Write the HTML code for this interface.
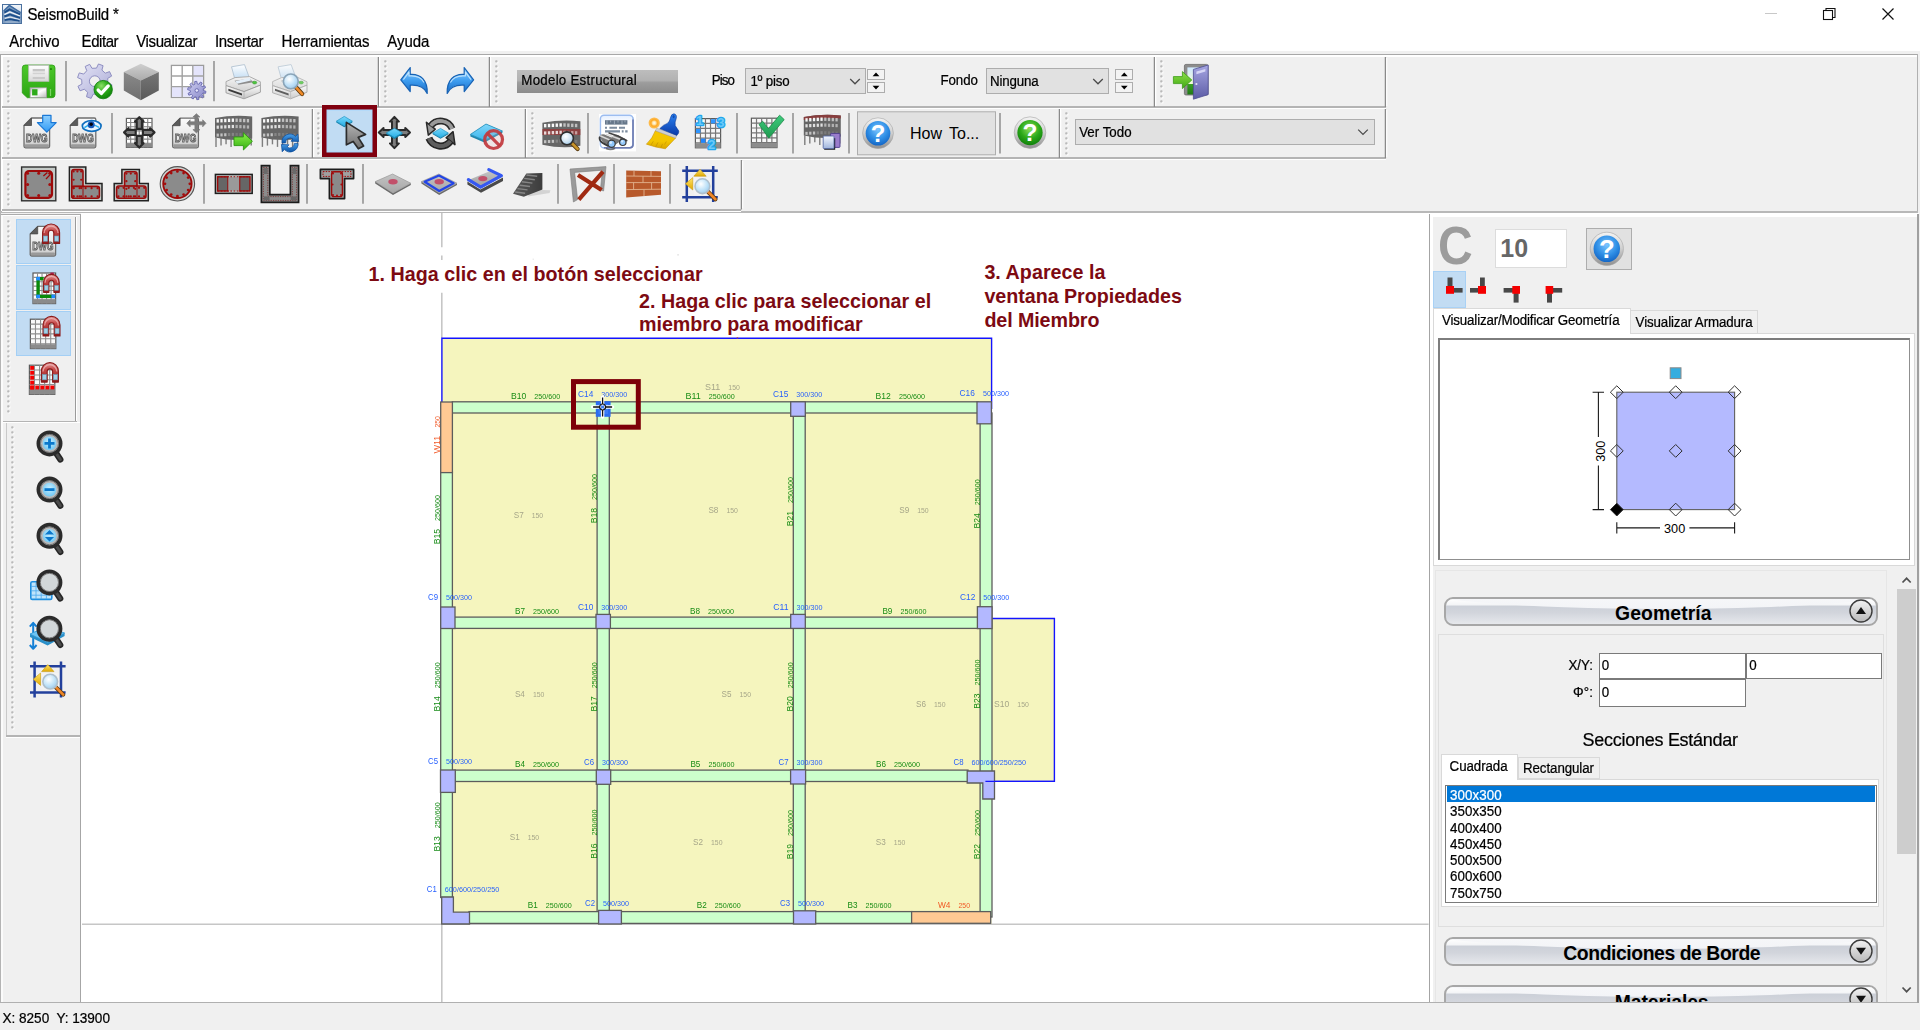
<!DOCTYPE html>
<html lang="es"><head><meta charset="utf-8"><title>SeismoBuild</title>
<style>
html,body{margin:0;padding:0}
body{width:1920px;height:1030px;overflow:hidden;background:#f0f0f0;position:relative;font-family:"Liberation Sans",sans-serif}
div,svg{position:absolute;box-sizing:border-box}
svg{overflow:visible}
svg text{font-family:"Liberation Sans",sans-serif}
</style></head><body>
<!-- p10_chrome -->
<div style="left:0px;top:0px;width:1920px;height:51px;background:#fff;"></div>
<svg style="left:2px;top:4px;" width="20" height="20" viewBox="0 0 20 20">
<defs><linearGradient id="ti" x1="0" y1="0" x2="0" y2="1"><stop offset="0" stop-color="#f4f7fa"/><stop offset=".3" stop-color="#e2e9f1"/><stop offset=".55" stop-color="#8fa9c6"/><stop offset="1" stop-color="#5f82ab"/></linearGradient>
<filter id="tib" x="-10%" y="-10%" width="120%" height="120%"><feGaussianBlur stdDeviation=".45"/></filter></defs>
<rect x="0" y="0" width="20" height="20" fill="url(#ti)"/>
<g filter="url(#tib)">
<path d="M1 7.4 L7.4 1 L19 8.6 L19 19 L1 19Z" fill="#7e9cc0"/>
<path d="M1.6 7 L7.4 1.4 L18.6 8.6" fill="none" stroke="#3d6aa0" stroke-width="1.5"/>
<path d="M2.4 8.6 L7.6 5.4 L18 10.4" fill="none" stroke="#1f508c" stroke-width="1.9"/>
<path d="M2.4 10.6 L7.8 7.9 L18 12" fill="none" stroke="#f3f6f9" stroke-width="1.3"/>
<path d="M2.4 12.5 L8 10.4 L18 14" fill="none" stroke="#1f508c" stroke-width="1.9"/>
<path d="M2.8 14.4 L8.2 13 L17.6 15.6" fill="none" stroke="#e7edf3" stroke-width="1.2"/>
<path d="M2.6 16.2 L8.2 15.2 L17.4 17" fill="none" stroke="#1f508c" stroke-width="1.8"/>
<path d="M3.4 18 H16.6" fill="none" stroke="#a9bdd4" stroke-width=".9"/>
</g>
<rect x=".5" y=".5" width="19" height="19" fill="none" stroke="#4b719f"/></svg>
<div style="left:27.5px;top:7.40px;font:normal 15px/15px 'Liberation Sans', sans-serif;color:#000;white-space:nowrap;letter-spacing:-0.173px;transform:scaleY(1.07);transform-origin:0 84.65%;-webkit-text-stroke:.22px #000;">SeismoBuild *</div>
<svg style="left:1760px;top:0px;" width="150" height="30" viewBox="0 0 150 30">
<path d="M5 13.5 H17" stroke="#c8c8c8" stroke-width="1"/>
<rect x="63.5" y="10.5" width="9" height="9" fill="none" stroke="#111" stroke-width="1.1"/>
<path d="M66 10.5 V8.5 H75 V17.5 H72.5" fill="none" stroke="#111" stroke-width="1.1"/>
<path d="M122.5 8.5 L133.5 19.5 M133.5 8.5 L122.5 19.5" stroke="#111" stroke-width="1.2" fill="none"/></svg>
<div style="left:9.3px;top:33.70px;font:normal 15px/15px 'Liberation Sans', sans-serif;color:#000;white-space:nowrap;letter-spacing:0.047px;transform:scaleY(1.07);transform-origin:0 84.65%;-webkit-text-stroke:.22px #000;">Archivo</div>
<div style="left:81.6px;top:33.70px;font:normal 15px/15px 'Liberation Sans', sans-serif;color:#000;white-space:nowrap;letter-spacing:-0.437px;transform:scaleY(1.07);transform-origin:0 84.65%;-webkit-text-stroke:.22px #000;">Editar</div>
<div style="left:136.2px;top:33.70px;font:normal 15px/15px 'Liberation Sans', sans-serif;color:#000;white-space:nowrap;letter-spacing:-0.373px;transform:scaleY(1.07);transform-origin:0 84.65%;-webkit-text-stroke:.22px #000;">Visualizar</div>
<div style="left:215px;top:33.70px;font:normal 15px/15px 'Liberation Sans', sans-serif;color:#000;white-space:nowrap;letter-spacing:-0.322px;transform:scaleY(1.07);transform-origin:0 84.65%;-webkit-text-stroke:.22px #000;">Insertar</div>
<div style="left:281.6px;top:33.70px;font:normal 15px/15px 'Liberation Sans', sans-serif;color:#000;white-space:nowrap;letter-spacing:-0.194px;transform:scaleY(1.07);transform-origin:0 84.65%;-webkit-text-stroke:.22px #000;">Herramientas</div>
<div style="left:387.3px;top:33.70px;font:normal 15px/15px 'Liberation Sans', sans-serif;color:#000;white-space:nowrap;letter-spacing:-0.04px;transform:scaleY(1.07);transform-origin:0 84.65%;-webkit-text-stroke:.22px #000;">Ayuda</div>
<!-- p20_toolbars -->
<div style="left:0px;top:54px;width:1918px;height:1px;background:#a8a8a8;"></div>
<div style="left:0px;top:54px;width:1px;height:158px;background:#a8a8a8;"></div>
<div style="left:1px;top:55px;width:1916px;height:2px;background:#ffffff;"></div>
<div style="left:1px;top:55px;width:1px;height:156px;background:#ffffff;"></div>
<div style="left:1917px;top:54px;width:1px;height:158px;background:#b0b0b0;"></div>
<div style="left:0px;top:211px;width:1918px;height:2px;background:#b8b8b8;"></div>
<div style="left:2px;top:106px;width:1384px;height:2px;background:#b4b4b4;"></div>
<div style="left:2px;top:108px;width:1384px;height:1px;background:#ffffff;"></div>
<div style="left:2px;top:157px;width:1384px;height:2px;background:#b4b4b4;"></div>
<div style="left:2px;top:159px;width:1384px;height:1px;background:#ffffff;"></div>
<div style="left:2px;top:208.5px;width:739px;height:2px;background:#b4b4b4;"></div>
<div style="left:2px;top:210.5px;width:739px;height:1px;background:#ffffff;"></div>
<svg style="left:376px;top:57px;" width="5" height="50" viewBox="0 0 5 50"><path d="M2.4 0 V50" stroke="#8a8a8a" stroke-width="1.3"/><path d="M3.7 1 V49" stroke="#fff" stroke-width="1.1"/></svg>
<div style="left:2px;top:57px;width:1px;height:49px;background:#ffffff;"></div>
<svg style="left:6.6px;top:60.4px;" width="4" height="45.6" viewBox="0 0 4 45.6"><rect x="1.2" y="1.2" width="2.2" height="2.2" fill="#fff"/><rect x="0.2" y="0.2" width="2.3" height="2.3" rx=".8" fill="#b9b9b9"/><rect x="1.2" y="6.2" width="2.2" height="2.2" fill="#fff"/><rect x="0.2" y="5.2" width="2.3" height="2.3" rx=".8" fill="#b9b9b9"/><rect x="1.2" y="11.2" width="2.2" height="2.2" fill="#fff"/><rect x="0.2" y="10.2" width="2.3" height="2.3" rx=".8" fill="#b9b9b9"/><rect x="1.2" y="16.2" width="2.2" height="2.2" fill="#fff"/><rect x="0.2" y="15.2" width="2.3" height="2.3" rx=".8" fill="#b9b9b9"/><rect x="1.2" y="21.2" width="2.2" height="2.2" fill="#fff"/><rect x="0.2" y="20.2" width="2.3" height="2.3" rx=".8" fill="#b9b9b9"/><rect x="1.2" y="26.2" width="2.2" height="2.2" fill="#fff"/><rect x="0.2" y="25.2" width="2.3" height="2.3" rx=".8" fill="#b9b9b9"/><rect x="1.2" y="31.2" width="2.2" height="2.2" fill="#fff"/><rect x="0.2" y="30.2" width="2.3" height="2.3" rx=".8" fill="#b9b9b9"/><rect x="1.2" y="36.2" width="2.2" height="2.2" fill="#fff"/><rect x="0.2" y="35.2" width="2.3" height="2.3" rx=".8" fill="#b9b9b9"/><rect x="1.2" y="41.2" width="2.2" height="2.2" fill="#fff"/><rect x="0.2" y="40.2" width="2.3" height="2.3" rx=".8" fill="#b9b9b9"/></svg>
<svg style="left:487px;top:57px;" width="5" height="50" viewBox="0 0 5 50"><path d="M2.4 0 V50" stroke="#8a8a8a" stroke-width="1.3"/><path d="M3.7 1 V49" stroke="#fff" stroke-width="1.1"/></svg>
<div style="left:379px;top:57px;width:1px;height:49px;background:#ffffff;"></div>
<svg style="left:383.6px;top:60.4px;" width="4" height="45.6" viewBox="0 0 4 45.6"><rect x="1.2" y="1.2" width="2.2" height="2.2" fill="#fff"/><rect x="0.2" y="0.2" width="2.3" height="2.3" rx=".8" fill="#b9b9b9"/><rect x="1.2" y="6.2" width="2.2" height="2.2" fill="#fff"/><rect x="0.2" y="5.2" width="2.3" height="2.3" rx=".8" fill="#b9b9b9"/><rect x="1.2" y="11.2" width="2.2" height="2.2" fill="#fff"/><rect x="0.2" y="10.2" width="2.3" height="2.3" rx=".8" fill="#b9b9b9"/><rect x="1.2" y="16.2" width="2.2" height="2.2" fill="#fff"/><rect x="0.2" y="15.2" width="2.3" height="2.3" rx=".8" fill="#b9b9b9"/><rect x="1.2" y="21.2" width="2.2" height="2.2" fill="#fff"/><rect x="0.2" y="20.2" width="2.3" height="2.3" rx=".8" fill="#b9b9b9"/><rect x="1.2" y="26.2" width="2.2" height="2.2" fill="#fff"/><rect x="0.2" y="25.2" width="2.3" height="2.3" rx=".8" fill="#b9b9b9"/><rect x="1.2" y="31.2" width="2.2" height="2.2" fill="#fff"/><rect x="0.2" y="30.2" width="2.3" height="2.3" rx=".8" fill="#b9b9b9"/><rect x="1.2" y="36.2" width="2.2" height="2.2" fill="#fff"/><rect x="0.2" y="35.2" width="2.3" height="2.3" rx=".8" fill="#b9b9b9"/><rect x="1.2" y="41.2" width="2.2" height="2.2" fill="#fff"/><rect x="0.2" y="40.2" width="2.3" height="2.3" rx=".8" fill="#b9b9b9"/></svg>
<svg style="left:1152px;top:57px;" width="5" height="50" viewBox="0 0 5 50"><path d="M2.4 0 V50" stroke="#8a8a8a" stroke-width="1.3"/><path d="M3.7 1 V49" stroke="#fff" stroke-width="1.1"/></svg>
<div style="left:490px;top:57px;width:1px;height:49px;background:#ffffff;"></div>
<svg style="left:494.6px;top:60.4px;" width="4" height="45.6" viewBox="0 0 4 45.6"><rect x="1.2" y="1.2" width="2.2" height="2.2" fill="#fff"/><rect x="0.2" y="0.2" width="2.3" height="2.3" rx=".8" fill="#b9b9b9"/><rect x="1.2" y="6.2" width="2.2" height="2.2" fill="#fff"/><rect x="0.2" y="5.2" width="2.3" height="2.3" rx=".8" fill="#b9b9b9"/><rect x="1.2" y="11.2" width="2.2" height="2.2" fill="#fff"/><rect x="0.2" y="10.2" width="2.3" height="2.3" rx=".8" fill="#b9b9b9"/><rect x="1.2" y="16.2" width="2.2" height="2.2" fill="#fff"/><rect x="0.2" y="15.2" width="2.3" height="2.3" rx=".8" fill="#b9b9b9"/><rect x="1.2" y="21.2" width="2.2" height="2.2" fill="#fff"/><rect x="0.2" y="20.2" width="2.3" height="2.3" rx=".8" fill="#b9b9b9"/><rect x="1.2" y="26.2" width="2.2" height="2.2" fill="#fff"/><rect x="0.2" y="25.2" width="2.3" height="2.3" rx=".8" fill="#b9b9b9"/><rect x="1.2" y="31.2" width="2.2" height="2.2" fill="#fff"/><rect x="0.2" y="30.2" width="2.3" height="2.3" rx=".8" fill="#b9b9b9"/><rect x="1.2" y="36.2" width="2.2" height="2.2" fill="#fff"/><rect x="0.2" y="35.2" width="2.3" height="2.3" rx=".8" fill="#b9b9b9"/><rect x="1.2" y="41.2" width="2.2" height="2.2" fill="#fff"/><rect x="0.2" y="40.2" width="2.3" height="2.3" rx=".8" fill="#b9b9b9"/></svg>
<svg style="left:1383px;top:57px;" width="5" height="50" viewBox="0 0 5 50"><path d="M2.4 0 V50" stroke="#8a8a8a" stroke-width="1.3"/><path d="M3.7 1 V49" stroke="#fff" stroke-width="1.1"/></svg>
<div style="left:1155px;top:57px;width:1px;height:49px;background:#ffffff;"></div>
<svg style="left:1159.6px;top:60.4px;" width="4" height="45.6" viewBox="0 0 4 45.6"><rect x="1.2" y="1.2" width="2.2" height="2.2" fill="#fff"/><rect x="0.2" y="0.2" width="2.3" height="2.3" rx=".8" fill="#b9b9b9"/><rect x="1.2" y="6.2" width="2.2" height="2.2" fill="#fff"/><rect x="0.2" y="5.2" width="2.3" height="2.3" rx=".8" fill="#b9b9b9"/><rect x="1.2" y="11.2" width="2.2" height="2.2" fill="#fff"/><rect x="0.2" y="10.2" width="2.3" height="2.3" rx=".8" fill="#b9b9b9"/><rect x="1.2" y="16.2" width="2.2" height="2.2" fill="#fff"/><rect x="0.2" y="15.2" width="2.3" height="2.3" rx=".8" fill="#b9b9b9"/><rect x="1.2" y="21.2" width="2.2" height="2.2" fill="#fff"/><rect x="0.2" y="20.2" width="2.3" height="2.3" rx=".8" fill="#b9b9b9"/><rect x="1.2" y="26.2" width="2.2" height="2.2" fill="#fff"/><rect x="0.2" y="25.2" width="2.3" height="2.3" rx=".8" fill="#b9b9b9"/><rect x="1.2" y="31.2" width="2.2" height="2.2" fill="#fff"/><rect x="0.2" y="30.2" width="2.3" height="2.3" rx=".8" fill="#b9b9b9"/><rect x="1.2" y="36.2" width="2.2" height="2.2" fill="#fff"/><rect x="0.2" y="35.2" width="2.3" height="2.3" rx=".8" fill="#b9b9b9"/><rect x="1.2" y="41.2" width="2.2" height="2.2" fill="#fff"/><rect x="0.2" y="40.2" width="2.3" height="2.3" rx=".8" fill="#b9b9b9"/></svg>
<svg style="left:309.5px;top:109px;" width="5" height="49" viewBox="0 0 5 49"><path d="M2.4 0 V49" stroke="#8a8a8a" stroke-width="1.3"/><path d="M3.7 1 V48" stroke="#fff" stroke-width="1.1"/></svg>
<div style="left:2px;top:109px;width:1px;height:48px;background:#ffffff;"></div>
<svg style="left:6.6px;top:112.4px;" width="4" height="44.599999999999994" viewBox="0 0 4 44.599999999999994"><rect x="1.2" y="1.2" width="2.2" height="2.2" fill="#fff"/><rect x="0.2" y="0.2" width="2.3" height="2.3" rx=".8" fill="#b9b9b9"/><rect x="1.2" y="6.2" width="2.2" height="2.2" fill="#fff"/><rect x="0.2" y="5.2" width="2.3" height="2.3" rx=".8" fill="#b9b9b9"/><rect x="1.2" y="11.2" width="2.2" height="2.2" fill="#fff"/><rect x="0.2" y="10.2" width="2.3" height="2.3" rx=".8" fill="#b9b9b9"/><rect x="1.2" y="16.2" width="2.2" height="2.2" fill="#fff"/><rect x="0.2" y="15.2" width="2.3" height="2.3" rx=".8" fill="#b9b9b9"/><rect x="1.2" y="21.2" width="2.2" height="2.2" fill="#fff"/><rect x="0.2" y="20.2" width="2.3" height="2.3" rx=".8" fill="#b9b9b9"/><rect x="1.2" y="26.2" width="2.2" height="2.2" fill="#fff"/><rect x="0.2" y="25.2" width="2.3" height="2.3" rx=".8" fill="#b9b9b9"/><rect x="1.2" y="31.2" width="2.2" height="2.2" fill="#fff"/><rect x="0.2" y="30.2" width="2.3" height="2.3" rx=".8" fill="#b9b9b9"/><rect x="1.2" y="36.2" width="2.2" height="2.2" fill="#fff"/><rect x="0.2" y="35.2" width="2.3" height="2.3" rx=".8" fill="#b9b9b9"/><rect x="1.2" y="41.2" width="2.2" height="2.2" fill="#fff"/><rect x="0.2" y="40.2" width="2.3" height="2.3" rx=".8" fill="#b9b9b9"/></svg>
<svg style="left:523px;top:109px;" width="5" height="49" viewBox="0 0 5 49"><path d="M2.4 0 V49" stroke="#8a8a8a" stroke-width="1.3"/><path d="M3.7 1 V48" stroke="#fff" stroke-width="1.1"/></svg>
<div style="left:312.5px;top:109px;width:1px;height:48px;background:#ffffff;"></div>
<svg style="left:317.1px;top:112.4px;" width="4" height="44.599999999999994" viewBox="0 0 4 44.599999999999994"><rect x="1.2" y="1.2" width="2.2" height="2.2" fill="#fff"/><rect x="0.2" y="0.2" width="2.3" height="2.3" rx=".8" fill="#b9b9b9"/><rect x="1.2" y="6.2" width="2.2" height="2.2" fill="#fff"/><rect x="0.2" y="5.2" width="2.3" height="2.3" rx=".8" fill="#b9b9b9"/><rect x="1.2" y="11.2" width="2.2" height="2.2" fill="#fff"/><rect x="0.2" y="10.2" width="2.3" height="2.3" rx=".8" fill="#b9b9b9"/><rect x="1.2" y="16.2" width="2.2" height="2.2" fill="#fff"/><rect x="0.2" y="15.2" width="2.3" height="2.3" rx=".8" fill="#b9b9b9"/><rect x="1.2" y="21.2" width="2.2" height="2.2" fill="#fff"/><rect x="0.2" y="20.2" width="2.3" height="2.3" rx=".8" fill="#b9b9b9"/><rect x="1.2" y="26.2" width="2.2" height="2.2" fill="#fff"/><rect x="0.2" y="25.2" width="2.3" height="2.3" rx=".8" fill="#b9b9b9"/><rect x="1.2" y="31.2" width="2.2" height="2.2" fill="#fff"/><rect x="0.2" y="30.2" width="2.3" height="2.3" rx=".8" fill="#b9b9b9"/><rect x="1.2" y="36.2" width="2.2" height="2.2" fill="#fff"/><rect x="0.2" y="35.2" width="2.3" height="2.3" rx=".8" fill="#b9b9b9"/><rect x="1.2" y="41.2" width="2.2" height="2.2" fill="#fff"/><rect x="0.2" y="40.2" width="2.3" height="2.3" rx=".8" fill="#b9b9b9"/></svg>
<svg style="left:1057.4px;top:109px;" width="5" height="49" viewBox="0 0 5 49"><path d="M2.4 0 V49" stroke="#8a8a8a" stroke-width="1.3"/><path d="M3.7 1 V48" stroke="#fff" stroke-width="1.1"/></svg>
<div style="left:526px;top:109px;width:1px;height:48px;background:#ffffff;"></div>
<svg style="left:530.6px;top:112.4px;" width="4" height="44.599999999999994" viewBox="0 0 4 44.599999999999994"><rect x="1.2" y="1.2" width="2.2" height="2.2" fill="#fff"/><rect x="0.2" y="0.2" width="2.3" height="2.3" rx=".8" fill="#b9b9b9"/><rect x="1.2" y="6.2" width="2.2" height="2.2" fill="#fff"/><rect x="0.2" y="5.2" width="2.3" height="2.3" rx=".8" fill="#b9b9b9"/><rect x="1.2" y="11.2" width="2.2" height="2.2" fill="#fff"/><rect x="0.2" y="10.2" width="2.3" height="2.3" rx=".8" fill="#b9b9b9"/><rect x="1.2" y="16.2" width="2.2" height="2.2" fill="#fff"/><rect x="0.2" y="15.2" width="2.3" height="2.3" rx=".8" fill="#b9b9b9"/><rect x="1.2" y="21.2" width="2.2" height="2.2" fill="#fff"/><rect x="0.2" y="20.2" width="2.3" height="2.3" rx=".8" fill="#b9b9b9"/><rect x="1.2" y="26.2" width="2.2" height="2.2" fill="#fff"/><rect x="0.2" y="25.2" width="2.3" height="2.3" rx=".8" fill="#b9b9b9"/><rect x="1.2" y="31.2" width="2.2" height="2.2" fill="#fff"/><rect x="0.2" y="30.2" width="2.3" height="2.3" rx=".8" fill="#b9b9b9"/><rect x="1.2" y="36.2" width="2.2" height="2.2" fill="#fff"/><rect x="0.2" y="35.2" width="2.3" height="2.3" rx=".8" fill="#b9b9b9"/><rect x="1.2" y="41.2" width="2.2" height="2.2" fill="#fff"/><rect x="0.2" y="40.2" width="2.3" height="2.3" rx=".8" fill="#b9b9b9"/></svg>
<svg style="left:1383px;top:109px;" width="5" height="49" viewBox="0 0 5 49"><path d="M2.4 0 V49" stroke="#8a8a8a" stroke-width="1.3"/><path d="M3.7 1 V48" stroke="#fff" stroke-width="1.1"/></svg>
<div style="left:1060.4px;top:109px;width:1px;height:48px;background:#ffffff;"></div>
<svg style="left:1065.0px;top:112.4px;" width="4" height="44.599999999999994" viewBox="0 0 4 44.599999999999994"><rect x="1.2" y="1.2" width="2.2" height="2.2" fill="#fff"/><rect x="0.2" y="0.2" width="2.3" height="2.3" rx=".8" fill="#b9b9b9"/><rect x="1.2" y="6.2" width="2.2" height="2.2" fill="#fff"/><rect x="0.2" y="5.2" width="2.3" height="2.3" rx=".8" fill="#b9b9b9"/><rect x="1.2" y="11.2" width="2.2" height="2.2" fill="#fff"/><rect x="0.2" y="10.2" width="2.3" height="2.3" rx=".8" fill="#b9b9b9"/><rect x="1.2" y="16.2" width="2.2" height="2.2" fill="#fff"/><rect x="0.2" y="15.2" width="2.3" height="2.3" rx=".8" fill="#b9b9b9"/><rect x="1.2" y="21.2" width="2.2" height="2.2" fill="#fff"/><rect x="0.2" y="20.2" width="2.3" height="2.3" rx=".8" fill="#b9b9b9"/><rect x="1.2" y="26.2" width="2.2" height="2.2" fill="#fff"/><rect x="0.2" y="25.2" width="2.3" height="2.3" rx=".8" fill="#b9b9b9"/><rect x="1.2" y="31.2" width="2.2" height="2.2" fill="#fff"/><rect x="0.2" y="30.2" width="2.3" height="2.3" rx=".8" fill="#b9b9b9"/><rect x="1.2" y="36.2" width="2.2" height="2.2" fill="#fff"/><rect x="0.2" y="35.2" width="2.3" height="2.3" rx=".8" fill="#b9b9b9"/><rect x="1.2" y="41.2" width="2.2" height="2.2" fill="#fff"/><rect x="0.2" y="40.2" width="2.3" height="2.3" rx=".8" fill="#b9b9b9"/></svg>
<svg style="left:738.5px;top:160px;" width="5" height="49.5" viewBox="0 0 5 49.5"><path d="M2.4 0 V49.5" stroke="#8a8a8a" stroke-width="1.3"/><path d="M3.7 1 V48.5" stroke="#fff" stroke-width="1.1"/></svg>
<div style="left:2px;top:160px;width:1px;height:48.5px;background:#ffffff;"></div>
<svg style="left:6.6px;top:163.4px;" width="4" height="45.099999999999994" viewBox="0 0 4 45.099999999999994"><rect x="1.2" y="1.2" width="2.2" height="2.2" fill="#fff"/><rect x="0.2" y="0.2" width="2.3" height="2.3" rx=".8" fill="#b9b9b9"/><rect x="1.2" y="6.2" width="2.2" height="2.2" fill="#fff"/><rect x="0.2" y="5.2" width="2.3" height="2.3" rx=".8" fill="#b9b9b9"/><rect x="1.2" y="11.2" width="2.2" height="2.2" fill="#fff"/><rect x="0.2" y="10.2" width="2.3" height="2.3" rx=".8" fill="#b9b9b9"/><rect x="1.2" y="16.2" width="2.2" height="2.2" fill="#fff"/><rect x="0.2" y="15.2" width="2.3" height="2.3" rx=".8" fill="#b9b9b9"/><rect x="1.2" y="21.2" width="2.2" height="2.2" fill="#fff"/><rect x="0.2" y="20.2" width="2.3" height="2.3" rx=".8" fill="#b9b9b9"/><rect x="1.2" y="26.2" width="2.2" height="2.2" fill="#fff"/><rect x="0.2" y="25.2" width="2.3" height="2.3" rx=".8" fill="#b9b9b9"/><rect x="1.2" y="31.2" width="2.2" height="2.2" fill="#fff"/><rect x="0.2" y="30.2" width="2.3" height="2.3" rx=".8" fill="#b9b9b9"/><rect x="1.2" y="36.2" width="2.2" height="2.2" fill="#fff"/><rect x="0.2" y="35.2" width="2.3" height="2.3" rx=".8" fill="#b9b9b9"/><rect x="1.2" y="41.2" width="2.2" height="2.2" fill="#fff"/><rect x="0.2" y="40.2" width="2.3" height="2.3" rx=".8" fill="#b9b9b9"/></svg>
<svg style="left:63.599999999999994px;top:61.4px;" width="4" height="40.199999999999996" viewBox="0 0 4 40.199999999999996"><path d="M2 0 V40.199999999999996" stroke="#767676" stroke-width="1.2"/></svg>
<svg style="left:212.1px;top:61.4px;" width="4" height="40.199999999999996" viewBox="0 0 4 40.199999999999996"><path d="M2 0 V40.199999999999996" stroke="#767676" stroke-width="1.2"/></svg>
<svg style="left:109.9px;top:112.8px;" width="4" height="40.60000000000001" viewBox="0 0 4 40.60000000000001"><path d="M2 0 V40.60000000000001" stroke="#767676" stroke-width="1.2"/></svg>
<svg style="left:586px;top:112.8px;" width="4" height="40.60000000000001" viewBox="0 0 4 40.60000000000001"><path d="M2 0 V40.60000000000001" stroke="#767676" stroke-width="1.2"/></svg>
<svg style="left:734.9px;top:112.8px;" width="4" height="40.60000000000001" viewBox="0 0 4 40.60000000000001"><path d="M2 0 V40.60000000000001" stroke="#767676" stroke-width="1.2"/></svg>
<svg style="left:790.9px;top:112.8px;" width="4" height="40.60000000000001" viewBox="0 0 4 40.60000000000001"><path d="M2 0 V40.60000000000001" stroke="#767676" stroke-width="1.2"/></svg>
<svg style="left:847.4px;top:112.8px;" width="4" height="40.60000000000001" viewBox="0 0 4 40.60000000000001"><path d="M2 0 V40.60000000000001" stroke="#767676" stroke-width="1.2"/></svg>
<svg style="left:998.2px;top:112.8px;" width="4" height="40.60000000000001" viewBox="0 0 4 40.60000000000001"><path d="M2 0 V40.60000000000001" stroke="#767676" stroke-width="1.2"/></svg>
<svg style="left:202.4px;top:164px;" width="4" height="39.80000000000001" viewBox="0 0 4 39.80000000000001"><path d="M2 0 V39.80000000000001" stroke="#767676" stroke-width="1.2"/></svg>
<svg style="left:304.9px;top:164px;" width="4" height="39.80000000000001" viewBox="0 0 4 39.80000000000001"><path d="M2 0 V39.80000000000001" stroke="#767676" stroke-width="1.2"/></svg>
<svg style="left:361px;top:164px;" width="4" height="39.80000000000001" viewBox="0 0 4 39.80000000000001"><path d="M2 0 V39.80000000000001" stroke="#767676" stroke-width="1.2"/></svg>
<svg style="left:555.9px;top:164px;" width="4" height="39.80000000000001" viewBox="0 0 4 39.80000000000001"><path d="M2 0 V39.80000000000001" stroke="#767676" stroke-width="1.2"/></svg>
<svg style="left:612.3px;top:164px;" width="4" height="39.80000000000001" viewBox="0 0 4 39.80000000000001"><path d="M2 0 V39.80000000000001" stroke="#767676" stroke-width="1.2"/></svg>
<svg style="left:668.4px;top:164px;" width="4" height="39.80000000000001" viewBox="0 0 4 39.80000000000001"><path d="M2 0 V39.80000000000001" stroke="#767676" stroke-width="1.2"/></svg>
<!-- p30_panels -->
<div style="left:81px;top:213px;width:1348px;height:789px;background:#fff;"></div>
<div style="left:0px;top:213px;width:81px;height:789px;background:#f0f0f0;"></div>
<div style="left:0px;top:213.5px;width:81px;height:1.5px;background:#ababab;"></div>
<div style="left:0px;top:213px;width:1px;height:789px;background:#b4b4b4;"></div>
<div style="left:79.5px;top:214px;width:1.6px;height:788px;background:#a6a6a6;"></div>
<div style="left:1.5px;top:215px;width:78px;height:1px;background:#fff;"></div>
<div style="left:1px;top:215px;width:2px;height:787px;background:#fbfbfb;"></div>
<div style="left:74.6px;top:217px;width:1.4px;height:204px;background:#9a9a9a;"></div>
<div style="left:76px;top:217px;width:1px;height:204px;background:#fff;"></div>
<div style="left:3px;top:420.5px;width:73.5px;height:1.5px;background:#b4b4b4;"></div>
<div style="left:3px;top:422px;width:77px;height:1px;background:#fff;"></div>
<svg style="left:7px;top:220px;" width="4" height="197" viewBox="0 0 4 197"><rect x="1.2" y="1.2" width="2.2" height="2.2" fill="#fff"/><rect x="0.2" y="0.2" width="2.3" height="2.3" rx=".8" fill="#b9b9b9"/><rect x="1.2" y="6.2" width="2.2" height="2.2" fill="#fff"/><rect x="0.2" y="5.2" width="2.3" height="2.3" rx=".8" fill="#b9b9b9"/><rect x="1.2" y="11.2" width="2.2" height="2.2" fill="#fff"/><rect x="0.2" y="10.2" width="2.3" height="2.3" rx=".8" fill="#b9b9b9"/><rect x="1.2" y="16.2" width="2.2" height="2.2" fill="#fff"/><rect x="0.2" y="15.2" width="2.3" height="2.3" rx=".8" fill="#b9b9b9"/><rect x="1.2" y="21.2" width="2.2" height="2.2" fill="#fff"/><rect x="0.2" y="20.2" width="2.3" height="2.3" rx=".8" fill="#b9b9b9"/><rect x="1.2" y="26.2" width="2.2" height="2.2" fill="#fff"/><rect x="0.2" y="25.2" width="2.3" height="2.3" rx=".8" fill="#b9b9b9"/><rect x="1.2" y="31.2" width="2.2" height="2.2" fill="#fff"/><rect x="0.2" y="30.2" width="2.3" height="2.3" rx=".8" fill="#b9b9b9"/><rect x="1.2" y="36.2" width="2.2" height="2.2" fill="#fff"/><rect x="0.2" y="35.2" width="2.3" height="2.3" rx=".8" fill="#b9b9b9"/><rect x="1.2" y="41.2" width="2.2" height="2.2" fill="#fff"/><rect x="0.2" y="40.2" width="2.3" height="2.3" rx=".8" fill="#b9b9b9"/><rect x="1.2" y="46.2" width="2.2" height="2.2" fill="#fff"/><rect x="0.2" y="45.2" width="2.3" height="2.3" rx=".8" fill="#b9b9b9"/><rect x="1.2" y="51.2" width="2.2" height="2.2" fill="#fff"/><rect x="0.2" y="50.2" width="2.3" height="2.3" rx=".8" fill="#b9b9b9"/><rect x="1.2" y="56.2" width="2.2" height="2.2" fill="#fff"/><rect x="0.2" y="55.2" width="2.3" height="2.3" rx=".8" fill="#b9b9b9"/><rect x="1.2" y="61.2" width="2.2" height="2.2" fill="#fff"/><rect x="0.2" y="60.2" width="2.3" height="2.3" rx=".8" fill="#b9b9b9"/><rect x="1.2" y="66.2" width="2.2" height="2.2" fill="#fff"/><rect x="0.2" y="65.2" width="2.3" height="2.3" rx=".8" fill="#b9b9b9"/><rect x="1.2" y="71.2" width="2.2" height="2.2" fill="#fff"/><rect x="0.2" y="70.2" width="2.3" height="2.3" rx=".8" fill="#b9b9b9"/><rect x="1.2" y="76.2" width="2.2" height="2.2" fill="#fff"/><rect x="0.2" y="75.2" width="2.3" height="2.3" rx=".8" fill="#b9b9b9"/><rect x="1.2" y="81.2" width="2.2" height="2.2" fill="#fff"/><rect x="0.2" y="80.2" width="2.3" height="2.3" rx=".8" fill="#b9b9b9"/><rect x="1.2" y="86.2" width="2.2" height="2.2" fill="#fff"/><rect x="0.2" y="85.2" width="2.3" height="2.3" rx=".8" fill="#b9b9b9"/><rect x="1.2" y="91.2" width="2.2" height="2.2" fill="#fff"/><rect x="0.2" y="90.2" width="2.3" height="2.3" rx=".8" fill="#b9b9b9"/><rect x="1.2" y="96.2" width="2.2" height="2.2" fill="#fff"/><rect x="0.2" y="95.2" width="2.3" height="2.3" rx=".8" fill="#b9b9b9"/><rect x="1.2" y="101.2" width="2.2" height="2.2" fill="#fff"/><rect x="0.2" y="100.2" width="2.3" height="2.3" rx=".8" fill="#b9b9b9"/><rect x="1.2" y="106.2" width="2.2" height="2.2" fill="#fff"/><rect x="0.2" y="105.2" width="2.3" height="2.3" rx=".8" fill="#b9b9b9"/><rect x="1.2" y="111.2" width="2.2" height="2.2" fill="#fff"/><rect x="0.2" y="110.2" width="2.3" height="2.3" rx=".8" fill="#b9b9b9"/><rect x="1.2" y="116.2" width="2.2" height="2.2" fill="#fff"/><rect x="0.2" y="115.2" width="2.3" height="2.3" rx=".8" fill="#b9b9b9"/><rect x="1.2" y="121.2" width="2.2" height="2.2" fill="#fff"/><rect x="0.2" y="120.2" width="2.3" height="2.3" rx=".8" fill="#b9b9b9"/><rect x="1.2" y="126.2" width="2.2" height="2.2" fill="#fff"/><rect x="0.2" y="125.2" width="2.3" height="2.3" rx=".8" fill="#b9b9b9"/><rect x="1.2" y="131.2" width="2.2" height="2.2" fill="#fff"/><rect x="0.2" y="130.2" width="2.3" height="2.3" rx=".8" fill="#b9b9b9"/><rect x="1.2" y="136.2" width="2.2" height="2.2" fill="#fff"/><rect x="0.2" y="135.2" width="2.3" height="2.3" rx=".8" fill="#b9b9b9"/><rect x="1.2" y="141.2" width="2.2" height="2.2" fill="#fff"/><rect x="0.2" y="140.2" width="2.3" height="2.3" rx=".8" fill="#b9b9b9"/><rect x="1.2" y="146.2" width="2.2" height="2.2" fill="#fff"/><rect x="0.2" y="145.2" width="2.3" height="2.3" rx=".8" fill="#b9b9b9"/><rect x="1.2" y="151.2" width="2.2" height="2.2" fill="#fff"/><rect x="0.2" y="150.2" width="2.3" height="2.3" rx=".8" fill="#b9b9b9"/><rect x="1.2" y="156.2" width="2.2" height="2.2" fill="#fff"/><rect x="0.2" y="155.2" width="2.3" height="2.3" rx=".8" fill="#b9b9b9"/><rect x="1.2" y="161.2" width="2.2" height="2.2" fill="#fff"/><rect x="0.2" y="160.2" width="2.3" height="2.3" rx=".8" fill="#b9b9b9"/><rect x="1.2" y="166.2" width="2.2" height="2.2" fill="#fff"/><rect x="0.2" y="165.2" width="2.3" height="2.3" rx=".8" fill="#b9b9b9"/><rect x="1.2" y="171.2" width="2.2" height="2.2" fill="#fff"/><rect x="0.2" y="170.2" width="2.3" height="2.3" rx=".8" fill="#b9b9b9"/><rect x="1.2" y="176.2" width="2.2" height="2.2" fill="#fff"/><rect x="0.2" y="175.2" width="2.3" height="2.3" rx=".8" fill="#b9b9b9"/><rect x="1.2" y="181.2" width="2.2" height="2.2" fill="#fff"/><rect x="0.2" y="180.2" width="2.3" height="2.3" rx=".8" fill="#b9b9b9"/><rect x="1.2" y="186.2" width="2.2" height="2.2" fill="#fff"/><rect x="0.2" y="185.2" width="2.3" height="2.3" rx=".8" fill="#b9b9b9"/><rect x="1.2" y="191.2" width="2.2" height="2.2" fill="#fff"/><rect x="0.2" y="190.2" width="2.3" height="2.3" rx=".8" fill="#b9b9b9"/></svg>
<div style="left:5.5px;top:423px;width:1.2px;height:313px;background:#c9c9c9;"></div>
<div style="left:6px;top:735.3px;width:74px;height:1.5px;background:#b4b4b4;"></div>
<div style="left:6px;top:736.8px;width:74px;height:1px;background:#fff;"></div>
<svg style="left:11px;top:426px;" width="4" height="306" viewBox="0 0 4 306"><rect x="1.2" y="1.2" width="2.2" height="2.2" fill="#fff"/><rect x="0.2" y="0.2" width="2.3" height="2.3" rx=".8" fill="#b9b9b9"/><rect x="1.2" y="6.2" width="2.2" height="2.2" fill="#fff"/><rect x="0.2" y="5.2" width="2.3" height="2.3" rx=".8" fill="#b9b9b9"/><rect x="1.2" y="11.2" width="2.2" height="2.2" fill="#fff"/><rect x="0.2" y="10.2" width="2.3" height="2.3" rx=".8" fill="#b9b9b9"/><rect x="1.2" y="16.2" width="2.2" height="2.2" fill="#fff"/><rect x="0.2" y="15.2" width="2.3" height="2.3" rx=".8" fill="#b9b9b9"/><rect x="1.2" y="21.2" width="2.2" height="2.2" fill="#fff"/><rect x="0.2" y="20.2" width="2.3" height="2.3" rx=".8" fill="#b9b9b9"/><rect x="1.2" y="26.2" width="2.2" height="2.2" fill="#fff"/><rect x="0.2" y="25.2" width="2.3" height="2.3" rx=".8" fill="#b9b9b9"/><rect x="1.2" y="31.2" width="2.2" height="2.2" fill="#fff"/><rect x="0.2" y="30.2" width="2.3" height="2.3" rx=".8" fill="#b9b9b9"/><rect x="1.2" y="36.2" width="2.2" height="2.2" fill="#fff"/><rect x="0.2" y="35.2" width="2.3" height="2.3" rx=".8" fill="#b9b9b9"/><rect x="1.2" y="41.2" width="2.2" height="2.2" fill="#fff"/><rect x="0.2" y="40.2" width="2.3" height="2.3" rx=".8" fill="#b9b9b9"/><rect x="1.2" y="46.2" width="2.2" height="2.2" fill="#fff"/><rect x="0.2" y="45.2" width="2.3" height="2.3" rx=".8" fill="#b9b9b9"/><rect x="1.2" y="51.2" width="2.2" height="2.2" fill="#fff"/><rect x="0.2" y="50.2" width="2.3" height="2.3" rx=".8" fill="#b9b9b9"/><rect x="1.2" y="56.2" width="2.2" height="2.2" fill="#fff"/><rect x="0.2" y="55.2" width="2.3" height="2.3" rx=".8" fill="#b9b9b9"/><rect x="1.2" y="61.2" width="2.2" height="2.2" fill="#fff"/><rect x="0.2" y="60.2" width="2.3" height="2.3" rx=".8" fill="#b9b9b9"/><rect x="1.2" y="66.2" width="2.2" height="2.2" fill="#fff"/><rect x="0.2" y="65.2" width="2.3" height="2.3" rx=".8" fill="#b9b9b9"/><rect x="1.2" y="71.2" width="2.2" height="2.2" fill="#fff"/><rect x="0.2" y="70.2" width="2.3" height="2.3" rx=".8" fill="#b9b9b9"/><rect x="1.2" y="76.2" width="2.2" height="2.2" fill="#fff"/><rect x="0.2" y="75.2" width="2.3" height="2.3" rx=".8" fill="#b9b9b9"/><rect x="1.2" y="81.2" width="2.2" height="2.2" fill="#fff"/><rect x="0.2" y="80.2" width="2.3" height="2.3" rx=".8" fill="#b9b9b9"/><rect x="1.2" y="86.2" width="2.2" height="2.2" fill="#fff"/><rect x="0.2" y="85.2" width="2.3" height="2.3" rx=".8" fill="#b9b9b9"/><rect x="1.2" y="91.2" width="2.2" height="2.2" fill="#fff"/><rect x="0.2" y="90.2" width="2.3" height="2.3" rx=".8" fill="#b9b9b9"/><rect x="1.2" y="96.2" width="2.2" height="2.2" fill="#fff"/><rect x="0.2" y="95.2" width="2.3" height="2.3" rx=".8" fill="#b9b9b9"/><rect x="1.2" y="101.2" width="2.2" height="2.2" fill="#fff"/><rect x="0.2" y="100.2" width="2.3" height="2.3" rx=".8" fill="#b9b9b9"/><rect x="1.2" y="106.2" width="2.2" height="2.2" fill="#fff"/><rect x="0.2" y="105.2" width="2.3" height="2.3" rx=".8" fill="#b9b9b9"/><rect x="1.2" y="111.2" width="2.2" height="2.2" fill="#fff"/><rect x="0.2" y="110.2" width="2.3" height="2.3" rx=".8" fill="#b9b9b9"/><rect x="1.2" y="116.2" width="2.2" height="2.2" fill="#fff"/><rect x="0.2" y="115.2" width="2.3" height="2.3" rx=".8" fill="#b9b9b9"/><rect x="1.2" y="121.2" width="2.2" height="2.2" fill="#fff"/><rect x="0.2" y="120.2" width="2.3" height="2.3" rx=".8" fill="#b9b9b9"/><rect x="1.2" y="126.2" width="2.2" height="2.2" fill="#fff"/><rect x="0.2" y="125.2" width="2.3" height="2.3" rx=".8" fill="#b9b9b9"/><rect x="1.2" y="131.2" width="2.2" height="2.2" fill="#fff"/><rect x="0.2" y="130.2" width="2.3" height="2.3" rx=".8" fill="#b9b9b9"/><rect x="1.2" y="136.2" width="2.2" height="2.2" fill="#fff"/><rect x="0.2" y="135.2" width="2.3" height="2.3" rx=".8" fill="#b9b9b9"/><rect x="1.2" y="141.2" width="2.2" height="2.2" fill="#fff"/><rect x="0.2" y="140.2" width="2.3" height="2.3" rx=".8" fill="#b9b9b9"/><rect x="1.2" y="146.2" width="2.2" height="2.2" fill="#fff"/><rect x="0.2" y="145.2" width="2.3" height="2.3" rx=".8" fill="#b9b9b9"/><rect x="1.2" y="151.2" width="2.2" height="2.2" fill="#fff"/><rect x="0.2" y="150.2" width="2.3" height="2.3" rx=".8" fill="#b9b9b9"/><rect x="1.2" y="156.2" width="2.2" height="2.2" fill="#fff"/><rect x="0.2" y="155.2" width="2.3" height="2.3" rx=".8" fill="#b9b9b9"/><rect x="1.2" y="161.2" width="2.2" height="2.2" fill="#fff"/><rect x="0.2" y="160.2" width="2.3" height="2.3" rx=".8" fill="#b9b9b9"/><rect x="1.2" y="166.2" width="2.2" height="2.2" fill="#fff"/><rect x="0.2" y="165.2" width="2.3" height="2.3" rx=".8" fill="#b9b9b9"/><rect x="1.2" y="171.2" width="2.2" height="2.2" fill="#fff"/><rect x="0.2" y="170.2" width="2.3" height="2.3" rx=".8" fill="#b9b9b9"/><rect x="1.2" y="176.2" width="2.2" height="2.2" fill="#fff"/><rect x="0.2" y="175.2" width="2.3" height="2.3" rx=".8" fill="#b9b9b9"/><rect x="1.2" y="181.2" width="2.2" height="2.2" fill="#fff"/><rect x="0.2" y="180.2" width="2.3" height="2.3" rx=".8" fill="#b9b9b9"/><rect x="1.2" y="186.2" width="2.2" height="2.2" fill="#fff"/><rect x="0.2" y="185.2" width="2.3" height="2.3" rx=".8" fill="#b9b9b9"/><rect x="1.2" y="191.2" width="2.2" height="2.2" fill="#fff"/><rect x="0.2" y="190.2" width="2.3" height="2.3" rx=".8" fill="#b9b9b9"/><rect x="1.2" y="196.2" width="2.2" height="2.2" fill="#fff"/><rect x="0.2" y="195.2" width="2.3" height="2.3" rx=".8" fill="#b9b9b9"/><rect x="1.2" y="201.2" width="2.2" height="2.2" fill="#fff"/><rect x="0.2" y="200.2" width="2.3" height="2.3" rx=".8" fill="#b9b9b9"/><rect x="1.2" y="206.2" width="2.2" height="2.2" fill="#fff"/><rect x="0.2" y="205.2" width="2.3" height="2.3" rx=".8" fill="#b9b9b9"/><rect x="1.2" y="211.2" width="2.2" height="2.2" fill="#fff"/><rect x="0.2" y="210.2" width="2.3" height="2.3" rx=".8" fill="#b9b9b9"/><rect x="1.2" y="216.2" width="2.2" height="2.2" fill="#fff"/><rect x="0.2" y="215.2" width="2.3" height="2.3" rx=".8" fill="#b9b9b9"/><rect x="1.2" y="221.2" width="2.2" height="2.2" fill="#fff"/><rect x="0.2" y="220.2" width="2.3" height="2.3" rx=".8" fill="#b9b9b9"/><rect x="1.2" y="226.2" width="2.2" height="2.2" fill="#fff"/><rect x="0.2" y="225.2" width="2.3" height="2.3" rx=".8" fill="#b9b9b9"/><rect x="1.2" y="231.2" width="2.2" height="2.2" fill="#fff"/><rect x="0.2" y="230.2" width="2.3" height="2.3" rx=".8" fill="#b9b9b9"/><rect x="1.2" y="236.2" width="2.2" height="2.2" fill="#fff"/><rect x="0.2" y="235.2" width="2.3" height="2.3" rx=".8" fill="#b9b9b9"/><rect x="1.2" y="241.2" width="2.2" height="2.2" fill="#fff"/><rect x="0.2" y="240.2" width="2.3" height="2.3" rx=".8" fill="#b9b9b9"/><rect x="1.2" y="246.2" width="2.2" height="2.2" fill="#fff"/><rect x="0.2" y="245.2" width="2.3" height="2.3" rx=".8" fill="#b9b9b9"/><rect x="1.2" y="251.2" width="2.2" height="2.2" fill="#fff"/><rect x="0.2" y="250.2" width="2.3" height="2.3" rx=".8" fill="#b9b9b9"/><rect x="1.2" y="256.2" width="2.2" height="2.2" fill="#fff"/><rect x="0.2" y="255.2" width="2.3" height="2.3" rx=".8" fill="#b9b9b9"/><rect x="1.2" y="261.2" width="2.2" height="2.2" fill="#fff"/><rect x="0.2" y="260.2" width="2.3" height="2.3" rx=".8" fill="#b9b9b9"/><rect x="1.2" y="266.2" width="2.2" height="2.2" fill="#fff"/><rect x="0.2" y="265.2" width="2.3" height="2.3" rx=".8" fill="#b9b9b9"/><rect x="1.2" y="271.2" width="2.2" height="2.2" fill="#fff"/><rect x="0.2" y="270.2" width="2.3" height="2.3" rx=".8" fill="#b9b9b9"/><rect x="1.2" y="276.2" width="2.2" height="2.2" fill="#fff"/><rect x="0.2" y="275.2" width="2.3" height="2.3" rx=".8" fill="#b9b9b9"/><rect x="1.2" y="281.2" width="2.2" height="2.2" fill="#fff"/><rect x="0.2" y="280.2" width="2.3" height="2.3" rx=".8" fill="#b9b9b9"/><rect x="1.2" y="286.2" width="2.2" height="2.2" fill="#fff"/><rect x="0.2" y="285.2" width="2.3" height="2.3" rx=".8" fill="#b9b9b9"/><rect x="1.2" y="291.2" width="2.2" height="2.2" fill="#fff"/><rect x="0.2" y="290.2" width="2.3" height="2.3" rx=".8" fill="#b9b9b9"/><rect x="1.2" y="296.2" width="2.2" height="2.2" fill="#fff"/><rect x="0.2" y="295.2" width="2.3" height="2.3" rx=".8" fill="#b9b9b9"/><rect x="1.2" y="301.2" width="2.2" height="2.2" fill="#fff"/><rect x="0.2" y="300.2" width="2.3" height="2.3" rx=".8" fill="#b9b9b9"/></svg>
<div style="left:16.3px;top:219.3px;width:54.6px;height:44.6px;background:#c2dcf3;border:1px solid #a3cff5;"></div>
<div style="left:16.3px;top:265.3px;width:54.6px;height:44.6px;background:#c2dcf3;border:1px solid #a3cff5;"></div>
<div style="left:16.3px;top:311.3px;width:54.6px;height:44.6px;background:#c2dcf3;border:1px solid #a3cff5;"></div>
<div style="left:0px;top:1001.5px;width:1920px;height:1.6px;background:#b0b0b0;"></div>
<div style="left:0px;top:1003px;width:1920px;height:27px;background:#f0f0f0;"></div>
<div style="left:2.5px;top:1012.09px;font:normal 13.6px/13.6px 'Liberation Sans', sans-serif;color:#000;white-space:nowrap;letter-spacing:-0.024px;transform:scaleY(1.12);transform-origin:0 84.65%;-webkit-text-stroke:.22px #000;white-space:pre;">X: 8250  Y: 13900</div>
<!-- p40_canvas -->
<svg style="left:81px;top:213px;" width="1348" height="789" viewBox="81 213 1348 789"><g stroke="#c6c6c6" stroke-width="1.6"><path d="M441.8 213 V247.3 M441.8 255.5 V260 M441.8 292.7 V338 M441.8 924 V1002"/><path d="M82 924.2 H1428.6"/></g><rect x="677.4" y="254.2" width="1.3" height="1.3" fill="#d8d8d8"/><rect x="532.6" y="258.6" width="1.2" height="1.2" fill="#e4e4e4"/><rect x="441.5" y="338" width="550" height="586" fill="#f5f5be"/><rect x="992" y="618.4" width="62.4" height="163" fill="#f5f5be"/><path d="M441.9 402 V338.2 H991.6 V409" fill="none" stroke="#1414ff" stroke-width="1.4"/><path d="M992 618.5 H1054.4 V781.4 H988" fill="none" stroke="#1414ff" stroke-width="1.4"/><rect x="440.7" y="472" width="11.70" height="425.50" fill="#ccffcc" stroke="#5c5c5c" stroke-width="1.3"/><rect x="597.1" y="413" width="12.20" height="499.00" fill="#ccffcc" stroke="#5c5c5c" stroke-width="1.3"/><rect x="793.3" y="413" width="11.90" height="499.00" fill="#ccffcc" stroke="#5c5c5c" stroke-width="1.3"/><rect x="980.1" y="413" width="11.90" height="504.00" fill="#ccffcc" stroke="#5c5c5c" stroke-width="1.3"/><rect x="452.3" y="401.8" width="525.70" height="11.20" fill="#ccffcc" stroke="#5c5c5c" stroke-width="1.3"/><rect x="454" y="617.1" width="524.00" height="11.30" fill="#ccffcc" stroke="#5c5c5c" stroke-width="1.3"/><rect x="454" y="770.1" width="514.00" height="11.40" fill="#ccffcc" stroke="#5c5c5c" stroke-width="1.3"/><rect x="469" y="911.6" width="443.00" height="11.80" fill="#ccffcc" stroke="#5c5c5c" stroke-width="1.3"/><rect x="440.7" y="402" width="11.70" height="70.60" fill="#ffc993" stroke="#5c5c5c" stroke-width="1.3"/><rect x="911.6" y="911.6" width="79.10" height="11.70" fill="#ffc993" stroke="#5c5c5c" stroke-width="1.3"/><rect x="790.7" y="401.8" width="14.60" height="14.50" fill="#b3b8ff" stroke="#5c5c5c" stroke-width="1.3"/><rect x="977" y="401.8" width="14.40" height="22.00" fill="#b3b8ff" stroke="#5c5c5c" stroke-width="1.3"/><rect x="440.7" y="607" width="14.30" height="21.50" fill="#b3b8ff" stroke="#5c5c5c" stroke-width="1.3"/><rect x="596" y="614.4" width="14.40" height="14.10" fill="#b3b8ff" stroke="#5c5c5c" stroke-width="1.3"/><rect x="790.7" y="614.4" width="14.60" height="14.00" fill="#b3b8ff" stroke="#5c5c5c" stroke-width="1.3"/><rect x="977.4" y="606.7" width="14.60" height="21.90" fill="#b3b8ff" stroke="#5c5c5c" stroke-width="1.3"/><rect x="440.5" y="770" width="14.80" height="22.40" fill="#b3b8ff" stroke="#5c5c5c" stroke-width="1.3"/><rect x="596.3" y="770" width="14.40" height="14.30" fill="#b3b8ff" stroke="#5c5c5c" stroke-width="1.3"/><rect x="790.6" y="769.8" width="15.00" height="14.20" fill="#b3b8ff" stroke="#5c5c5c" stroke-width="1.3"/><rect x="598.6" y="910.4" width="22.80" height="13.60" fill="#b3b8ff" stroke="#5c5c5c" stroke-width="1.3"/><rect x="793.5" y="910.8" width="22.20" height="13.20" fill="#b3b8ff" stroke="#5c5c5c" stroke-width="1.3"/><path d="M441.7 897 H453.4 V912.2 H469.5 V924 H441.7Z" fill="#b3b8ff" stroke="#5c5c5c" stroke-width="1.3"/><path d="M967.2 771 H994.5 V799 H982.8 V783 H967.2Z" fill="#b3b8ff" stroke="#5c5c5c" stroke-width="1.3"/><path d="M985.4 781.4 H1054.4" stroke="#1414ff" stroke-width="1.4"/><rect x="595.8" y="401.2" width="14.8" height="15.6" fill="#2b6cf0"/><rect x="598.5" y="404" width="9.5" height="10" fill="#3d7cf5"/><text x="511" y="398.85" font-size="9.2" fill="#0d870d" textLength="15.3" lengthAdjust="spacingAndGlyphs" opacity="0.95">B10</text><text x="534.3" y="398.85" font-size="7.4" fill="#0d870d" textLength="26" lengthAdjust="spacingAndGlyphs" opacity="0.95">250/600</text><text x="685.5" y="398.85" font-size="9.2" fill="#0d870d" textLength="15.3" lengthAdjust="spacingAndGlyphs" opacity="0.95">B11</text><text x="708.8" y="398.85" font-size="7.4" fill="#0d870d" textLength="26" lengthAdjust="spacingAndGlyphs" opacity="0.95">250/600</text><text x="875.6" y="398.85" font-size="9.2" fill="#0d870d" textLength="15.3" lengthAdjust="spacingAndGlyphs" opacity="0.95">B12</text><text x="898.9" y="398.85" font-size="7.4" fill="#0d870d" textLength="26" lengthAdjust="spacingAndGlyphs" opacity="0.95">250/600</text><text x="515" y="613.65" font-size="9.2" fill="#0d870d" textLength="10" lengthAdjust="spacingAndGlyphs" opacity="0.95">B7</text><text x="533" y="613.65" font-size="7.4" fill="#0d870d" textLength="26" lengthAdjust="spacingAndGlyphs" opacity="0.95">250/600</text><text x="690" y="613.65" font-size="9.2" fill="#0d870d" textLength="10" lengthAdjust="spacingAndGlyphs" opacity="0.95">B8</text><text x="708" y="613.65" font-size="7.4" fill="#0d870d" textLength="26" lengthAdjust="spacingAndGlyphs" opacity="0.95">250/600</text><text x="882.4" y="613.65" font-size="9.2" fill="#0d870d" textLength="10" lengthAdjust="spacingAndGlyphs" opacity="0.95">B9</text><text x="900.4" y="613.65" font-size="7.4" fill="#0d870d" textLength="26" lengthAdjust="spacingAndGlyphs" opacity="0.95">250/600</text><text x="515" y="766.65" font-size="9.2" fill="#0d870d" textLength="10" lengthAdjust="spacingAndGlyphs" opacity="0.95">B4</text><text x="533" y="766.65" font-size="7.4" fill="#0d870d" textLength="26" lengthAdjust="spacingAndGlyphs" opacity="0.95">250/600</text><text x="690.4" y="766.65" font-size="9.2" fill="#0d870d" textLength="10" lengthAdjust="spacingAndGlyphs" opacity="0.95">B5</text><text x="708.4" y="766.65" font-size="7.4" fill="#0d870d" textLength="26" lengthAdjust="spacingAndGlyphs" opacity="0.95">250/600</text><text x="876" y="766.65" font-size="9.2" fill="#0d870d" textLength="10" lengthAdjust="spacingAndGlyphs" opacity="0.95">B6</text><text x="894" y="766.65" font-size="7.4" fill="#0d870d" textLength="26" lengthAdjust="spacingAndGlyphs" opacity="0.95">250/600</text><text x="527.8" y="908.25" font-size="9.2" fill="#0d870d" textLength="10" lengthAdjust="spacingAndGlyphs" opacity="0.95">B1</text><text x="545.8" y="908.25" font-size="7.4" fill="#0d870d" textLength="26" lengthAdjust="spacingAndGlyphs" opacity="0.95">250/600</text><text x="696.7" y="908.25" font-size="9.2" fill="#0d870d" textLength="10" lengthAdjust="spacingAndGlyphs" opacity="0.95">B2</text><text x="714.7" y="908.25" font-size="7.4" fill="#0d870d" textLength="26" lengthAdjust="spacingAndGlyphs" opacity="0.95">250/600</text><text x="847.5" y="908.25" font-size="9.2" fill="#0d870d" textLength="10" lengthAdjust="spacingAndGlyphs" opacity="0.95">B3</text><text x="865.5" y="908.25" font-size="7.4" fill="#0d870d" textLength="26" lengthAdjust="spacingAndGlyphs" opacity="0.95">250/600</text><text x="938" y="908.15" font-size="9.2" fill="#f0501c" textLength="12.5" lengthAdjust="spacingAndGlyphs" opacity="0.95">W4</text><text x="958.5" y="908.15" font-size="7.4" fill="#f0501c" textLength="11.5" lengthAdjust="spacingAndGlyphs" opacity="0.95">250</text><text x="578" y="396.95" font-size="9.2" fill="#1c58ff" textLength="15.3" lengthAdjust="spacingAndGlyphs" opacity="0.95">C14</text><text x="601.3" y="396.95" font-size="7.4" fill="#1c58ff" textLength="26" lengthAdjust="spacingAndGlyphs" opacity="0.95">300/300</text><text x="773" y="397.15" font-size="9.2" fill="#1c58ff" textLength="15.3" lengthAdjust="spacingAndGlyphs" opacity="0.95">C15</text><text x="796.3" y="397.15" font-size="7.4" fill="#1c58ff" textLength="26" lengthAdjust="spacingAndGlyphs" opacity="0.95">300/300</text><text x="959.6" y="395.65" font-size="9.2" fill="#1c58ff" textLength="15.3" lengthAdjust="spacingAndGlyphs" opacity="0.95">C16</text><text x="982.9" y="395.65" font-size="7.4" fill="#1c58ff" textLength="26" lengthAdjust="spacingAndGlyphs" opacity="0.95">500/300</text><text x="428" y="600.25" font-size="9.2" fill="#1c58ff" textLength="10" lengthAdjust="spacingAndGlyphs" opacity="0.95">C9</text><text x="446" y="600.25" font-size="7.4" fill="#1c58ff" textLength="26" lengthAdjust="spacingAndGlyphs" opacity="0.95">500/300</text><text x="578" y="609.65" font-size="9.2" fill="#1c58ff" textLength="15.3" lengthAdjust="spacingAndGlyphs" opacity="0.95">C10</text><text x="601.3" y="609.65" font-size="7.4" fill="#1c58ff" textLength="26" lengthAdjust="spacingAndGlyphs" opacity="0.95">300/300</text><text x="773.3" y="609.65" font-size="9.2" fill="#1c58ff" textLength="15.3" lengthAdjust="spacingAndGlyphs" opacity="0.95">C11</text><text x="796.6" y="609.65" font-size="7.4" fill="#1c58ff" textLength="26" lengthAdjust="spacingAndGlyphs" opacity="0.95">300/300</text><text x="960" y="600.25" font-size="9.2" fill="#1c58ff" textLength="15.3" lengthAdjust="spacingAndGlyphs" opacity="0.95">C12</text><text x="983.3" y="600.25" font-size="7.4" fill="#1c58ff" textLength="26" lengthAdjust="spacingAndGlyphs" opacity="0.95">500/300</text><text x="428" y="764.45" font-size="9.2" fill="#1c58ff" textLength="10" lengthAdjust="spacingAndGlyphs" opacity="0.95">C5</text><text x="446" y="764.45" font-size="7.4" fill="#1c58ff" textLength="26" lengthAdjust="spacingAndGlyphs" opacity="0.95">500/300</text><text x="584" y="765.15" font-size="9.2" fill="#1c58ff" textLength="10" lengthAdjust="spacingAndGlyphs" opacity="0.95">C6</text><text x="602" y="765.15" font-size="7.4" fill="#1c58ff" textLength="26" lengthAdjust="spacingAndGlyphs" opacity="0.95">300/300</text><text x="778.6" y="765.15" font-size="9.2" fill="#1c58ff" textLength="10" lengthAdjust="spacingAndGlyphs" opacity="0.95">C7</text><text x="796.6" y="765.15" font-size="7.4" fill="#1c58ff" textLength="26" lengthAdjust="spacingAndGlyphs" opacity="0.95">300/300</text><text x="953.5" y="764.65" font-size="9.2" fill="#1c58ff" textLength="10" lengthAdjust="spacingAndGlyphs" opacity="0.95">C8</text><text x="971.5" y="764.65" font-size="7.4" fill="#1c58ff" textLength="54.5" lengthAdjust="spacingAndGlyphs" opacity="0.95">600/600/250/250</text><text x="426.8" y="891.65" font-size="9.2" fill="#1c58ff" textLength="10" lengthAdjust="spacingAndGlyphs" opacity="0.95">C1</text><text x="444.8" y="891.65" font-size="7.4" fill="#1c58ff" textLength="54.5" lengthAdjust="spacingAndGlyphs" opacity="0.95">600/600/250/250</text><text x="585" y="905.65" font-size="9.2" fill="#1c58ff" textLength="10" lengthAdjust="spacingAndGlyphs" opacity="0.95">C2</text><text x="603" y="905.65" font-size="7.4" fill="#1c58ff" textLength="26" lengthAdjust="spacingAndGlyphs" opacity="0.95">500/300</text><text x="780" y="905.95" font-size="9.2" fill="#1c58ff" textLength="10" lengthAdjust="spacingAndGlyphs" opacity="0.95">C3</text><text x="798" y="905.95" font-size="7.4" fill="#1c58ff" textLength="26" lengthAdjust="spacingAndGlyphs" opacity="0.95">500/300</text><text x="705" y="390.15" font-size="9.2" fill="#a2a286" textLength="15.3" lengthAdjust="spacingAndGlyphs" opacity="0.95">S11</text><text x="728.3" y="390.15" font-size="7.4" fill="#a2a286" textLength="11.5" lengthAdjust="spacingAndGlyphs" opacity="0.95">150</text><text x="513.7" y="518.45" font-size="9.2" fill="#a2a286" textLength="10" lengthAdjust="spacingAndGlyphs" opacity="0.95">S7</text><text x="531.7" y="518.45" font-size="7.4" fill="#a2a286" textLength="11.5" lengthAdjust="spacingAndGlyphs" opacity="0.95">150</text><text x="708.4" y="513.15" font-size="9.2" fill="#a2a286" textLength="10" lengthAdjust="spacingAndGlyphs" opacity="0.95">S8</text><text x="726.4" y="513.15" font-size="7.4" fill="#a2a286" textLength="11.5" lengthAdjust="spacingAndGlyphs" opacity="0.95">150</text><text x="899.2" y="513.15" font-size="9.2" fill="#a2a286" textLength="10" lengthAdjust="spacingAndGlyphs" opacity="0.95">S9</text><text x="917.2" y="513.15" font-size="7.4" fill="#a2a286" textLength="11.5" lengthAdjust="spacingAndGlyphs" opacity="0.95">150</text><text x="514.9" y="696.85" font-size="9.2" fill="#a2a286" textLength="10" lengthAdjust="spacingAndGlyphs" opacity="0.95">S4</text><text x="532.9" y="696.85" font-size="7.4" fill="#a2a286" textLength="11.5" lengthAdjust="spacingAndGlyphs" opacity="0.95">150</text><text x="721.5" y="696.85" font-size="9.2" fill="#a2a286" textLength="10" lengthAdjust="spacingAndGlyphs" opacity="0.95">S5</text><text x="739.5" y="696.85" font-size="7.4" fill="#a2a286" textLength="11.5" lengthAdjust="spacingAndGlyphs" opacity="0.95">150</text><text x="916" y="707.35" font-size="9.2" fill="#a2a286" textLength="10" lengthAdjust="spacingAndGlyphs" opacity="0.95">S6</text><text x="934" y="707.35" font-size="7.4" fill="#a2a286" textLength="11.5" lengthAdjust="spacingAndGlyphs" opacity="0.95">150</text><text x="994" y="707.35" font-size="9.2" fill="#a2a286" textLength="15.3" lengthAdjust="spacingAndGlyphs" opacity="0.95">S10</text><text x="1017.3" y="707.35" font-size="7.4" fill="#a2a286" textLength="11.5" lengthAdjust="spacingAndGlyphs" opacity="0.95">150</text><text x="509.7" y="839.65" font-size="9.2" fill="#a2a286" textLength="10" lengthAdjust="spacingAndGlyphs" opacity="0.95">S1</text><text x="527.7" y="839.65" font-size="7.4" fill="#a2a286" textLength="11.5" lengthAdjust="spacingAndGlyphs" opacity="0.95">150</text><text x="693" y="844.95" font-size="9.2" fill="#a2a286" textLength="10" lengthAdjust="spacingAndGlyphs" opacity="0.95">S2</text><text x="711" y="844.95" font-size="7.4" fill="#a2a286" textLength="11.5" lengthAdjust="spacingAndGlyphs" opacity="0.95">150</text><text x="875.8" y="844.95" font-size="9.2" fill="#a2a286" textLength="10" lengthAdjust="spacingAndGlyphs" opacity="0.95">S3</text><text x="893.8" y="844.95" font-size="7.4" fill="#a2a286" textLength="11.5" lengthAdjust="spacingAndGlyphs" opacity="0.95">150</text><text x="440.2" y="544.2" font-size="9.2" fill="#0d870d" textLength="15.3" lengthAdjust="spacingAndGlyphs" transform="rotate(-90 440.2 544.2)" opacity="0.95">B15</text><text x="440.2" y="520.9" font-size="7.4" fill="#0d870d" textLength="26" lengthAdjust="spacingAndGlyphs" transform="rotate(-90 440.2 520.9)" opacity="0.95">250/600</text><text x="597.2" y="523.2" font-size="9.2" fill="#0d870d" textLength="15.3" lengthAdjust="spacingAndGlyphs" transform="rotate(-90 597.2 523.2)" opacity="0.95">B18</text><text x="597.2" y="499.9" font-size="7.4" fill="#0d870d" textLength="26" lengthAdjust="spacingAndGlyphs" transform="rotate(-90 597.2 499.9)" opacity="0.95">250/600</text><text x="793" y="526.2" font-size="9.2" fill="#0d870d" textLength="15.3" lengthAdjust="spacingAndGlyphs" transform="rotate(-90 793 526.2)" opacity="0.95">B21</text><text x="793" y="502.9" font-size="7.4" fill="#0d870d" textLength="26" lengthAdjust="spacingAndGlyphs" transform="rotate(-90 793 502.9)" opacity="0.95">250/600</text><text x="980" y="528.6" font-size="9.2" fill="#0d870d" textLength="15.3" lengthAdjust="spacingAndGlyphs" transform="rotate(-90 980 528.6)" opacity="0.95">B24</text><text x="980" y="505.3" font-size="7.4" fill="#0d870d" textLength="26" lengthAdjust="spacingAndGlyphs" transform="rotate(-90 980 505.3)" opacity="0.95">250/600</text><text x="440.2" y="711.6" font-size="9.2" fill="#0d870d" textLength="15.3" lengthAdjust="spacingAndGlyphs" transform="rotate(-90 440.2 711.6)" opacity="0.95">B14</text><text x="440.2" y="688.3" font-size="7.4" fill="#0d870d" textLength="26" lengthAdjust="spacingAndGlyphs" transform="rotate(-90 440.2 688.3)" opacity="0.95">250/600</text><text x="597" y="711.6" font-size="9.2" fill="#0d870d" textLength="15.3" lengthAdjust="spacingAndGlyphs" transform="rotate(-90 597 711.6)" opacity="0.95">B17</text><text x="597" y="688.3" font-size="7.4" fill="#0d870d" textLength="26" lengthAdjust="spacingAndGlyphs" transform="rotate(-90 597 688.3)" opacity="0.95">250/600</text><text x="793" y="711.6" font-size="9.2" fill="#0d870d" textLength="15.3" lengthAdjust="spacingAndGlyphs" transform="rotate(-90 793 711.6)" opacity="0.95">B20</text><text x="793" y="688.3" font-size="7.4" fill="#0d870d" textLength="26" lengthAdjust="spacingAndGlyphs" transform="rotate(-90 793 688.3)" opacity="0.95">250/600</text><text x="979.7" y="708.8" font-size="9.2" fill="#0d870d" textLength="15.3" lengthAdjust="spacingAndGlyphs" transform="rotate(-90 979.7 708.8)" opacity="0.95">B23</text><text x="979.7" y="685.5" font-size="7.4" fill="#0d870d" textLength="26" lengthAdjust="spacingAndGlyphs" transform="rotate(-90 979.7 685.5)" opacity="0.95">250/600</text><text x="440.2" y="851.6" font-size="9.2" fill="#0d870d" textLength="15.3" lengthAdjust="spacingAndGlyphs" transform="rotate(-90 440.2 851.6)" opacity="0.95">B13</text><text x="440.2" y="828.3" font-size="7.4" fill="#0d870d" textLength="26" lengthAdjust="spacingAndGlyphs" transform="rotate(-90 440.2 828.3)" opacity="0.95">250/600</text><text x="597" y="858.8" font-size="9.2" fill="#0d870d" textLength="15.3" lengthAdjust="spacingAndGlyphs" transform="rotate(-90 597 858.8)" opacity="0.95">B16</text><text x="597" y="835.5" font-size="7.4" fill="#0d870d" textLength="26" lengthAdjust="spacingAndGlyphs" transform="rotate(-90 597 835.5)" opacity="0.95">250/600</text><text x="793" y="859.2" font-size="9.2" fill="#0d870d" textLength="15.3" lengthAdjust="spacingAndGlyphs" transform="rotate(-90 793 859.2)" opacity="0.95">B19</text><text x="793" y="835.9" font-size="7.4" fill="#0d870d" textLength="26" lengthAdjust="spacingAndGlyphs" transform="rotate(-90 793 835.9)" opacity="0.95">250/600</text><text x="980" y="859.2" font-size="9.2" fill="#0d870d" textLength="15.3" lengthAdjust="spacingAndGlyphs" transform="rotate(-90 980 859.2)" opacity="0.95">B22</text><text x="980" y="835.9" font-size="7.4" fill="#0d870d" textLength="26" lengthAdjust="spacingAndGlyphs" transform="rotate(-90 980 835.9)" opacity="0.95">250/600</text><text x="440.4" y="453.6" font-size="9.2" fill="#f0501c" textLength="18" lengthAdjust="spacingAndGlyphs" transform="rotate(-90 440.4 453.6)" opacity="0.95">W11</text><text x="440.4" y="427.6" font-size="7.4" fill="#f0501c" textLength="11.5" lengthAdjust="spacingAndGlyphs" transform="rotate(-90 440.4 427.6)" opacity="0.95">250</text><rect x="573.5" y="381.6" width="64.8" height="45.6" fill="none" stroke="#7d0008" stroke-width="5"/><g transform="translate(602.6 407)"><path d="M0 -10 V-3 M0 3 V10 M-10 0 H-3 M3 0 H10" stroke="#fff" stroke-width="3.4" stroke-linecap="round"/><path d="M0 -9.5 V-3 M0 3 V9.5 M-9.5 0 H-3 M3 0 H9.5" stroke="#111" stroke-width="1.3"/><circle r="3" fill="none" stroke="#111" stroke-width="1.2"/></g><rect x="736.6" y="337.2" width="1.6" height="1.2" fill="#b05060"/></svg>
<div style="left:368.5px;top:264.62px;font:bold 19.7px/19.7px 'Liberation Sans', sans-serif;color:#7d0a12;white-space:nowrap;letter-spacing:0.042px;">1. Haga clic en el botón seleccionar</div>
<div style="left:639px;top:291.72px;font:bold 19.7px/19.7px 'Liberation Sans', sans-serif;color:#7d0a12;white-space:nowrap;letter-spacing:0.036px;">2. Haga clic para seleccionar el</div>
<div style="left:639px;top:315.42px;font:bold 19.7px/19.7px 'Liberation Sans', sans-serif;color:#7d0a12;white-space:nowrap;letter-spacing:-0.03px;">miembro para modificar</div>
<div style="left:984.4px;top:262.72px;font:bold 19.7px/19.7px 'Liberation Sans', sans-serif;color:#7d0a12;white-space:nowrap;letter-spacing:0.023px;">3. Aparece la</div>
<div style="left:984.4px;top:286.72px;font:bold 19.7px/19.7px 'Liberation Sans', sans-serif;color:#7d0a12;white-space:nowrap;letter-spacing:-0.031px;">ventana Propiedades</div>
<div style="left:984.4px;top:310.72px;font:bold 19.7px/19.7px 'Liberation Sans', sans-serif;color:#7d0a12;white-space:nowrap;letter-spacing:-0.093px;">del Miembro</div>
<!-- p50_right -->
<div style="left:1429px;top:213px;width:491px;height:789px;background:#fff;"></div>
<div style="left:1428.7px;top:214px;width:1.5px;height:788px;background:#a4a4a4;"></div>
<div style="left:1432.5px;top:216.5px;width:484.5px;height:785.5px;background:#f0f0f0;width:484.5px;"></div>
<div style="left:1917px;top:213.5px;width:1.5px;height:789px;background:#a0a0a0;"></div>
<div style="left:1918.5px;top:213px;width:1.5px;height:790px;background:#f0f0f0;"></div>
<div style="left:1438.4px;top:218.70px;font:bold 53.4px/53.4px 'Liberation Sans', sans-serif;color:#9c9c9c;white-space:nowrap;transform:scaleX(.9);transform-origin:0 0;">C</div>
<div style="left:1495px;top:229px;width:72px;height:38.6px;background:#fff;border:1px solid #dcdcdc;"></div>
<div style="left:1500.2px;top:235.64px;font:bold 25px/25px 'Liberation Sans', sans-serif;color:#666;white-space:nowrap;letter-spacing:0.192px;">10</div>
<div style="left:1585.8px;top:228px;width:46.6px;height:41.8px;background:#e1e1e1;border:1px solid #adadad;"></div>
<svg style="left:1586px;top:228px;" width="46" height="42" viewBox="1586 228 46 42"><defs><radialGradient id="rg1" cx="0.5" cy="0.35" r="0.7"><stop offset="0" stop-color="#7cc6ff"/><stop offset="0.55" stop-color="#2f8fe6"/><stop offset="1" stop-color="#0f5fc0"/></radialGradient><linearGradient id="lg2" x1="0" y1="0" x2="0" y2="1"><stop offset="0" stop-color="#f4f4f4"/><stop offset="0.5" stop-color="#cfcfcf"/><stop offset="1" stop-color="#8f8f8f"/></linearGradient></defs><circle cx="1606.80" cy="248.80" r="16.60" fill="url(#lg2)" stroke="#a2a2a2" stroke-width="0.6"/><circle cx="1606.80" cy="248.80" r="13.28" fill="url(#rg1)"/><text x="1606.80" y="258.06" font-size="25.7" font-weight="bold" fill="#fff" text-anchor="middle">?</text></svg>
<div style="left:1433px;top:271.3px;width:33.4px;height:36.4px;background:#c2dcf3;border:1px solid #a9d1f5;"></div>
<svg style="left:1433px;top:271px;" width="140" height="40" viewBox="1433 271 140 40"><rect x="1447.5" y="277.5" width="5.0" height="9.5" fill="#484848"/><rect x="1453" y="288" width="9.6" height="4.6" fill="#484848"/><rect x="1446" y="286" width="8.0" height="7.8" fill="#f40000"/><rect x="1470" y="288" width="9.0" height="4.6" fill="#484848"/><rect x="1480" y="277.5" width="4.8" height="9.5" fill="#484848"/><rect x="1478" y="286" width="8.0" height="7.8" fill="#f40000"/><rect x="1503.6" y="288" width="9.4" height="4.6" fill="#484848"/><rect x="1513.6" y="293" width="5.0" height="9.6" fill="#484848"/><rect x="1512.3" y="286" width="7.7" height="7.8" fill="#f40000"/><rect x="1553" y="288" width="9.2" height="4.6" fill="#484848"/><rect x="1547" y="293" width="5.0" height="9.6" fill="#484848"/><rect x="1545.6" y="286" width="7.6" height="7.8" fill="#f40000"/></svg>
<div style="left:1433px;top:333.3px;width:481.8px;height:232.4px;background:#fff;border:1px solid #d9d9d9;"></div>
<div style="left:1630px;top:310.3px;width:128.3px;height:23.6px;background:#f0f0f0;border:1px solid #d9d9d9;"></div>
<div style="left:1433px;top:308px;width:197.6px;height:26.4px;background:#fff;border:1px solid #d9d9d9;border-bottom:none;"></div>
<div style="left:1442px;top:313.92px;font:normal 13.33px/13.33px 'Liberation Sans', sans-serif;color:#000;white-space:nowrap;letter-spacing:-0.152px;transform:scaleY(1.1);transform-origin:0 84.65%;-webkit-text-stroke:.22px #000;">Visualizar/Modificar Geometría</div>
<div style="left:1635.6px;top:315.92px;font:normal 13.33px/13.33px 'Liberation Sans', sans-serif;color:#000;white-space:nowrap;letter-spacing:-0.113px;transform:scaleY(1.1);transform-origin:0 84.65%;-webkit-text-stroke:.22px #000;">Visualizar Armadura</div>
<div style="left:1438px;top:338px;width:472.4px;height:222.2px;background:#fff;border:2px solid #7d7d7d;border-right:1px solid #8f8f8f;border-bottom:1px solid #8f8f8f;"></div>
<svg style="left:1438px;top:338px;" width="472" height="222" viewBox="1438 338 472 222"><rect x="1616.8" y="392.2" width="117.8" height="117.4" fill="#b4baff" stroke="#606060" stroke-width="1.1"/><rect x="1670.2" y="367.8" width="10.8" height="10.8" fill="#34addf" stroke="#8a8a8a" stroke-width="1"/><path d="M1610.3999999999999 392.2 L1616.8 385.8 L1623.2 392.2 L1616.8 398.59999999999997Z" fill="none" stroke="#303030" stroke-width="1"/><path d="M1610.3999999999999 450.9 L1616.8 444.5 L1623.2 450.9 L1616.8 457.29999999999995Z" fill="none" stroke="#303030" stroke-width="1"/><path d="M1610.3999999999999 509.6 L1616.8 503.20000000000005 L1623.2 509.6 L1616.8 516.0Z" fill="#000" stroke="#303030" stroke-width="1"/><path d="M1669.3 392.2 L1675.7 385.8 L1682.1000000000001 392.2 L1675.7 398.59999999999997Z" fill="none" stroke="#303030" stroke-width="1"/><path d="M1669.3 450.9 L1675.7 444.5 L1682.1000000000001 450.9 L1675.7 457.29999999999995Z" fill="none" stroke="#303030" stroke-width="1"/><path d="M1669.3 509.6 L1675.7 503.20000000000005 L1682.1000000000001 509.6 L1675.7 516.0Z" fill="none" stroke="#303030" stroke-width="1"/><path d="M1728.1999999999998 392.2 L1734.6 385.8 L1741.0 392.2 L1734.6 398.59999999999997Z" fill="none" stroke="#303030" stroke-width="1"/><path d="M1728.1999999999998 450.9 L1734.6 444.5 L1741.0 450.9 L1734.6 457.29999999999995Z" fill="none" stroke="#303030" stroke-width="1"/><path d="M1728.1999999999998 509.6 L1734.6 503.20000000000005 L1741.0 509.6 L1734.6 516.0Z" fill="none" stroke="#303030" stroke-width="1"/><g stroke="#1a1a1a" stroke-width="1.1" fill="none"><path d="M1598.4 392.2 V437 M1598.4 465.5 V509.6 M1592.6 392.2 H1604 M1592.6 509.6 H1604"/><path d="M1616.8 527.9 H1660 M1689.4 527.9 H1734.6 M1616.8 522.2 V533.6 M1734.6 522.2 V533.6"/></g><text x="1664" y="533.3" font-size="13.4" fill="#000" textLength="21.2" lengthAdjust="spacingAndGlyphs">300</text><text x="1605.3" y="461.8" font-size="13.4" fill="#000" textLength="21.2" lengthAdjust="spacingAndGlyphs" transform="rotate(-90 1605.3 461.8)">300</text></svg>
<div style="left:1435px;top:570px;width:452px;height:432px;border:1px solid #e6e6e6;border-bottom:none;"></div>
<div style="left:1897px;top:570px;width:19px;height:432px;background:#f0f0f0;"></div>
<div style="left:1897px;top:589px;width:19px;height:265px;background:#cdcdcd;"></div>
<svg style="left:1897px;top:570px;" width="19" height="432" viewBox="0 0 19 432"><path d="M5.5 12.5 L9.6 8.3 L13.7 12.5" fill="none" stroke="#505050" stroke-width="1.7"/><path d="M5.5 417.5 L9.6 421.7 L13.7 417.5" fill="none" stroke="#505050" stroke-width="1.7"/></svg>
<div style="left:1444px;top:597.4px;width:433.5999999999999px;height:29px;border-radius:9px;border:2px solid #a7a7a7;background:linear-gradient(#ffffff 0%,#f4f5f7 22%,#ccd0d8 30%,#d2d5dc 55%,#e6e8ec 100%);overflow:hidden"><div style="left:-40px;top:-34px;width:513.5999999999999px;height:44px;border-radius:50%;background:linear-gradient(#ffffff,#f3f4f7);"></div></div>
<div style="left:1615px;top:603.88px;font:bold 19.4px/19.4px 'Liberation Sans', sans-serif;color:#000;white-space:nowrap;letter-spacing:0.08px;">Geometría</div>
<svg style="left:1848px;top:598.3px;" width="26" height="26" viewBox="0 0 26 26"><defs><linearGradient id="ab597" x1="0" y1="0" x2="0" y2="1"><stop offset="0" stop-color="#f2f2f2"/><stop offset="1" stop-color="#b9b9b9"/></linearGradient></defs>
<circle cx="13" cy="13" r="11" fill="url(#ab597)" stroke="#3c3c3c" stroke-width="1.4"/>
<path d="M-5 3 L0 -4 L5 3Z" transform="translate(13 13)" fill="#111"/></svg>
<div style="left:1438px;top:634px;width:446.4px;height:293px;border:1px solid #dedede;"></div>
<div style="left:1568.4px;top:659.12px;font:normal 13.33px/13.33px 'Liberation Sans', sans-serif;color:#000;white-space:nowrap;letter-spacing:0.049px;transform:scaleY(1.1);transform-origin:0 84.65%;-webkit-text-stroke:.22px #000;">X/Y:</div>
<div style="left:1573px;top:685.92px;font:normal 13.33px/13.33px 'Liberation Sans', sans-serif;color:#000;white-space:nowrap;letter-spacing:0.165px;transform:scaleY(1.1);transform-origin:0 84.65%;-webkit-text-stroke:.22px #000;">Φ°:</div>
<div style="left:1598.6px;top:653px;width:147.4px;height:26px;background:#fff;border:1.4px solid #7a7a7a;"></div>
<div style="left:1746.2px;top:653px;width:135.6px;height:26px;background:#fff;border:1.4px solid #7a7a7a;"></div>
<div style="left:1598.6px;top:678.6px;width:147.4px;height:28.2px;background:#fff;border:1.4px solid #7a7a7a;"></div>
<div style="left:1601.8px;top:659.02px;font:normal 13.33px/13.33px 'Liberation Sans', sans-serif;color:#000;white-space:nowrap;transform:scaleY(1.1);transform-origin:0 84.65%;-webkit-text-stroke:.22px #000;">0</div>
<div style="left:1749.2px;top:659.02px;font:normal 13.33px/13.33px 'Liberation Sans', sans-serif;color:#000;white-space:nowrap;transform:scaleY(1.1);transform-origin:0 84.65%;-webkit-text-stroke:.22px #000;">0</div>
<div style="left:1601.8px;top:686.12px;font:normal 13.33px/13.33px 'Liberation Sans', sans-serif;color:#000;white-space:nowrap;transform:scaleY(1.1);transform-origin:0 84.65%;-webkit-text-stroke:.22px #000;">0</div>
<div style="left:1582.6px;top:731.26px;font:normal 18px/18px 'Liberation Sans', sans-serif;color:#000;white-space:nowrap;letter-spacing:-0.276px;transform:scaleY(1.05);transform-origin:0 84.65%;-webkit-text-stroke:.22px #000;">Secciones Estándar</div>
<div style="left:1441px;top:778.6px;width:438.2px;height:128.2px;background:#fff;border:1px solid #d9d9d9;"></div>
<div style="left:1518px;top:756.6px;width:82px;height:22.8px;background:#f0f0f0;border:1px solid #d9d9d9;"></div>
<div style="left:1441px;top:754px;width:77.4px;height:25.6px;background:#fff;border:1px solid #d9d9d9;border-bottom:none;"></div>
<div style="left:1449.6px;top:759.52px;font:normal 13.33px/13.33px 'Liberation Sans', sans-serif;color:#000;white-space:nowrap;letter-spacing:-0.078px;transform:scaleY(1.1);transform-origin:0 84.65%;-webkit-text-stroke:.22px #000;">Cuadrada</div>
<div style="left:1523px;top:762.02px;font:normal 13.33px/13.33px 'Liberation Sans', sans-serif;color:#000;white-space:nowrap;letter-spacing:-0.088px;transform:scaleY(1.1);transform-origin:0 84.65%;-webkit-text-stroke:.22px #000;">Rectangular</div>
<div style="left:1445.2px;top:784.6px;width:432.2px;height:118.8px;background:#fff;border:1px solid #7a7a7a;"></div>
<div style="left:1447.4px;top:786.4px;width:427.8px;height:15.6px;background:#0078d7;"></div>
<div style="left:1450px;top:789.02px;font:normal 13.33px/13.33px 'Liberation Sans', sans-serif;color:#fff;white-space:nowrap;letter-spacing:0.076px;transform:scaleY(1.1);transform-origin:0 84.65%;-webkit-text-stroke:.22px #fff;">300x300</div>
<div style="left:1450px;top:805.27px;font:normal 13.33px/13.33px 'Liberation Sans', sans-serif;color:#000;white-space:nowrap;letter-spacing:0.076px;transform:scaleY(1.1);transform-origin:0 84.65%;-webkit-text-stroke:.22px #000;">350x350</div>
<div style="left:1450px;top:821.52px;font:normal 13.33px/13.33px 'Liberation Sans', sans-serif;color:#000;white-space:nowrap;letter-spacing:0.076px;transform:scaleY(1.1);transform-origin:0 84.65%;-webkit-text-stroke:.22px #000;">400x400</div>
<div style="left:1450px;top:837.77px;font:normal 13.33px/13.33px 'Liberation Sans', sans-serif;color:#000;white-space:nowrap;letter-spacing:0.076px;transform:scaleY(1.1);transform-origin:0 84.65%;-webkit-text-stroke:.22px #000;">450x450</div>
<div style="left:1450px;top:854.02px;font:normal 13.33px/13.33px 'Liberation Sans', sans-serif;color:#000;white-space:nowrap;letter-spacing:0.076px;transform:scaleY(1.1);transform-origin:0 84.65%;-webkit-text-stroke:.22px #000;">500x500</div>
<div style="left:1450px;top:870.27px;font:normal 13.33px/13.33px 'Liberation Sans', sans-serif;color:#000;white-space:nowrap;letter-spacing:0.076px;transform:scaleY(1.1);transform-origin:0 84.65%;-webkit-text-stroke:.22px #000;">600x600</div>
<div style="left:1450px;top:886.52px;font:normal 13.33px/13.33px 'Liberation Sans', sans-serif;color:#000;white-space:nowrap;letter-spacing:0.076px;transform:scaleY(1.1);transform-origin:0 84.65%;-webkit-text-stroke:.22px #000;">750x750</div>
<div style="left:1444px;top:937.4px;width:433.5999999999999px;height:29px;border-radius:9px;border:2px solid #a7a7a7;background:linear-gradient(#ffffff 0%,#f4f5f7 22%,#ccd0d8 30%,#d2d5dc 55%,#e6e8ec 100%);overflow:hidden"><div style="left:-40px;top:-34px;width:513.5999999999999px;height:44px;border-radius:50%;background:linear-gradient(#ffffff,#f3f4f7);"></div></div>
<div style="left:1563.3px;top:944.48px;font:bold 19.4px/19.4px 'Liberation Sans', sans-serif;color:#000;white-space:nowrap;letter-spacing:-0.446px;">Condiciones de Borde</div>
<svg style="left:1848px;top:938.3px;" width="26" height="26" viewBox="0 0 26 26"><defs><linearGradient id="ab937" x1="0" y1="0" x2="0" y2="1"><stop offset="0" stop-color="#f2f2f2"/><stop offset="1" stop-color="#b9b9b9"/></linearGradient></defs>
<circle cx="13" cy="13" r="11" fill="url(#ab937)" stroke="#3c3c3c" stroke-width="1.4"/>
<path d="M-5 -3.2 L0 3.8 L5 -3.2Z" transform="translate(13 13)" fill="#111"/></svg>
<div style="left:1432.5px;top:980px;width:460px;height:21.5px;overflow:hidden"><div style="left:-1432.5px;top:-980px;width:1920px;height:60px"><div style="left:1444px;top:985px;width:433.5999999999999px;height:29px;border-radius:9px;border:2px solid #a7a7a7;background:linear-gradient(#ffffff 0%,#f4f5f7 22%,#ccd0d8 30%,#d2d5dc 55%,#e6e8ec 100%);overflow:hidden"><div style="left:-40px;top:-34px;width:513.5999999999999px;height:44px;border-radius:50%;background:linear-gradient(#ffffff,#f3f4f7);"></div></div>
<div style="left:1614.7px;top:992.68px;font:bold 19.4px/19.4px 'Liberation Sans', sans-serif;color:#000;white-space:nowrap;letter-spacing:-0.1px;">Materiales</div>
<svg style="left:1848px;top:985.9px;" width="26" height="26" viewBox="0 0 26 26"><defs><linearGradient id="ab985" x1="0" y1="0" x2="0" y2="1"><stop offset="0" stop-color="#f2f2f2"/><stop offset="1" stop-color="#b9b9b9"/></linearGradient></defs>
<circle cx="13" cy="13" r="11" fill="url(#ab985)" stroke="#3c3c3c" stroke-width="1.4"/>
<path d="M-5 -3.2 L0 3.8 L5 -3.2Z" transform="translate(13 13)" fill="#111"/></svg>
</div></div>
<!-- p60_row1 -->
<svg style="left:0px;top:54px;" width="1400" height="54" viewBox="0 54 1400 54"><defs><linearGradient id="lg3" x1="0" y1="0" x2="0" y2="1"><stop offset="0" stop-color="#4cc82a"/><stop offset="1" stop-color="#2ba612"/></linearGradient><linearGradient id="lg4" x1="0" y1="0" x2="0" y2="1"><stop offset="0" stop-color="#ffffff"/><stop offset="1" stop-color="#d9d9d9"/></linearGradient><linearGradient id="lg5" x1="0" y1="0" x2="1" y2="1"><stop offset="0" stop-color="#bcbcbc"/><stop offset="0.5" stop-color="#ffffff"/><stop offset="1" stop-color="#b8b8b8"/></linearGradient></defs><g transform="translate(22.3 65)"><path d="M3 0 H29.8 Q32.7 0 32.7 3 V29.8 Q32.7 32.7 29.8 32.7 H5 L0 28 V3 Q0 0 3 0Z" fill="url(#lg3)" stroke="#2c9c14" stroke-width="0.8"/><rect x="6.40" y="0.30" width="20.20" height="16.00" fill="url(#lg4)" stroke="#bdbdbd" stroke-width="0.8"/><rect x="10.40" y="4.00" width="12.20" height="2.40" fill="#c6c6c6"/><rect x="10.40" y="7.60" width="12.20" height="1.60" fill="#d2d2d2"/><rect x="10.40" y="12.00" width="12.20" height="2.00" fill="#c9c9c9"/><rect x="27.80" y="3.20" width="1.70" height="1.70" fill="#1d7a0c"/><rect x="7.80" y="22.80" width="16.40" height="9.70" fill="url(#lg5)" stroke="#a0a0a0" stroke-width="0.8"/><rect x="9.80" y="24.20" width="5.40" height="6.20" fill="#2cab18"/><rect x="27.60" y="24.00" width="1.20" height="7.00" fill="#8fe078" opacity=".8"/></g><defs><linearGradient id="lg6" x1="0" y1="0" x2="1" y2="1"><stop offset="0" stop-color="#e4e4f6"/><stop offset="0.55" stop-color="#c4c4e4"/><stop offset="1" stop-color="#a2a2cf"/></linearGradient></defs><path d="M107.89 82.91 L112.02 84.86 L110.32 89.49 L105.91 88.32 L102.84 91.67 L104.39 95.96 L99.91 98.04 L97.62 94.09 L93.09 94.29 L91.14 98.42 L86.51 96.72 L87.68 92.31 L84.33 89.24 L80.04 90.79 L77.96 86.31 L81.91 84.02 L81.71 79.49 L77.58 77.54 L79.28 72.91 L83.69 74.08 L86.76 70.73 L85.21 66.44 L89.69 64.36 L91.98 68.31 L96.51 68.11 L98.46 63.98 L103.09 65.68 L101.92 70.09 L105.27 73.16 L109.56 71.61 L111.64 76.09 L107.69 78.38Z M100.20 81.20 A5.4 5.4 0 1 0 89.40 81.20 A5.4 5.4 0 1 0 100.20 81.20Z" fill="url(#lg6)" stroke="#8f8fc2" stroke-width="1" stroke-linejoin="round" fill-rule="evenodd"/><defs><radialGradient id="rg7" cx="0.4" cy="0.3" r="0.75"><stop offset="0" stop-color="#8fe06a"/><stop offset="0.45" stop-color="#2fae1c"/><stop offset="1" stop-color="#0d7f08"/></radialGradient></defs><circle cx="103.20" cy="89.60" r="9.20" fill="url(#rg7)" stroke="#0c7a0a" stroke-width="0.8"/><path d="M98.14 90.06 L101.36 93.46 L108.26 85.92" fill="none" stroke="#fff" stroke-width="3.312" stroke-linecap="round" stroke-linejoin="round"/><defs><linearGradient id="lg8" x1="0" y1="0" x2="0" y2="1"><stop offset="0" stop-color="#cfcfcf"/><stop offset="1" stop-color="#ababab"/></linearGradient><linearGradient id="lg9" x1="0" y1="0" x2="0" y2="1"><stop offset="0" stop-color="#8a8a8a"/><stop offset="1" stop-color="#6e6e6e"/></linearGradient><linearGradient id="lg10" x1="0" y1="0" x2="0" y2="1"><stop offset="0" stop-color="#767676"/><stop offset="1" stop-color="#5a5a5a"/></linearGradient></defs><path d="M140.8 63.8 L158.8 72 L140.8 80.4 L123.8 72Z" fill="url(#lg8)"/><path d="M123.8 72 L140.8 80.4 V100.2 L123.8 90.6Z" fill="url(#lg9)"/><path d="M140.8 80.4 L158.8 72 V90.6 L140.8 100.2Z" fill="url(#lg10)"/><rect x="171.40" y="65.40" width="32.20" height="32.00" fill="#fff" stroke="#9c9c9c" stroke-width="1.3"/><rect x="193.20" y="66.00" width="9.80" height="30.60" fill="#e4e4fb"/><rect x="172.00" y="87.00" width="30.80" height="9.80" fill="#e4e4fb"/><path d="M182.2 65.4 V97.4 M192.8 65.4 V97.4 M171.4 76 H203.6 M171.4 86.6 H203.6" fill="none" stroke="#a2a2a2" stroke-width="1.4"/><defs><linearGradient id="lg12" x1="0" y1="0" x2="1" y2="1"><stop offset="0" stop-color="#d2d2f0"/><stop offset="0.5" stop-color="#a9a9dc"/><stop offset="1" stop-color="#8686c4"/></linearGradient></defs><path d="M203.40 90.66 L205.96 91.30 L205.55 93.33 L202.94 92.92 L202.04 94.51 L203.74 96.54 L202.22 97.93 L200.34 96.07 L198.69 96.82 L198.87 99.46 L196.81 99.70 L196.39 97.09 L194.61 96.73 L193.20 98.97 L191.40 97.95 L192.60 95.59 L191.37 94.25 L188.91 95.24 L188.05 93.36 L190.41 92.15 L190.20 90.34 L187.64 89.70 L188.05 87.67 L190.66 88.08 L191.56 86.49 L189.86 84.46 L191.38 83.07 L193.26 84.93 L194.91 84.18 L194.73 81.54 L196.79 81.30 L197.21 83.91 L198.99 84.27 L200.40 82.03 L202.20 83.05 L201.00 85.41 L202.23 86.75 L204.69 85.76 L205.55 87.64 L203.19 88.85Z M198.60 90.50 A1.8 1.8 0 1 0 195.00 90.50 A1.8 1.8 0 1 0 198.60 90.50Z" fill="url(#lg12)" stroke="#6f6fb4" stroke-width="1" stroke-linejoin="round" fill-rule="evenodd"/><defs><linearGradient id="lg13" x1="0" y1="0" x2="0" y2="1"><stop offset="0" stop-color="#ffffff"/><stop offset="1" stop-color="#b9d8f2"/></linearGradient><linearGradient id="lg14" x1="0" y1="0" x2="0" y2="1"><stop offset="0" stop-color="#fdfdfd"/><stop offset="1" stop-color="#c4c4c4"/></linearGradient><linearGradient id="lg15" x1="0" y1="0" x2="0" y2="1"><stop offset="0" stop-color="#f4f4f4"/><stop offset="1" stop-color="#d2d2d2"/></linearGradient></defs><g opacity="1.0"><path d="M231.5 66.8 L244.5 64.60000000000001 L249.4 77.8 L235.4 81.2Z" fill="url(#lg13)" stroke="#a9bccd" stroke-width="0.8" stroke-linejoin="round"/><path d="M226 81.6 L235 77.60000000000001 L249.5 76.60000000000001 L260.4 81.80000000000001 L260.4 85.2 L244 91.6 L226 85.6Z" fill="url(#lg15)" stroke="#a6a6a6" stroke-width="0.9" stroke-linejoin="round"/><path d="M234.5 80.80000000000001 L249.6 78.8 L253.5 82.2 L238.4 84.80000000000001Z" fill="#8e8e8e"/><path d="M235.4 81.2 L249.4 77.8 L251 80.6 L237 83.80000000000001Z" fill="#e4eff9"/><path d="M226 85.6 L244 91.6 L260.4 85.2 L260.4 92.2 L244 98.80000000000001 L226 92.80000000000001Z" fill="url(#lg14)" stroke="#9a9a9a" stroke-width="0.9" stroke-linejoin="round"/><path d="M228.4 88.80000000000001 L242 93.4 L242 95.4 L228.4 90.80000000000001Z" fill="#3a3a3a"/><path d="M244 91.6 V98.80000000000001" fill="none" stroke="#b0b0b0" stroke-width="0.8"/><ellipse cx="254.6" cy="82.6" rx="2.2" ry="1.4" fill="#4cc83c" stroke="#2c8c24" stroke-width=".5"/></g><defs><linearGradient id="lg16" x1="0" y1="0" x2="0" y2="1"><stop offset="0" stop-color="#ffffff"/><stop offset="1" stop-color="#b9d8f2"/></linearGradient><linearGradient id="lg17" x1="0" y1="0" x2="0" y2="1"><stop offset="0" stop-color="#fdfdfd"/><stop offset="1" stop-color="#c4c4c4"/></linearGradient><linearGradient id="lg18" x1="0" y1="0" x2="0" y2="1"><stop offset="0" stop-color="#f4f4f4"/><stop offset="1" stop-color="#d2d2d2"/></linearGradient></defs><g opacity="0.8"><path d="M278.1 66.8 L291.1 64.60000000000001 L296.0 77.8 L282.0 81.2Z" fill="url(#lg16)" stroke="#a9bccd" stroke-width="0.8" stroke-linejoin="round"/><path d="M272.6 81.6 L281.6 77.60000000000001 L296.1 76.60000000000001 L307.0 81.80000000000001 L307.0 85.2 L290.6 91.6 L272.6 85.6Z" fill="url(#lg18)" stroke="#a6a6a6" stroke-width="0.9" stroke-linejoin="round"/><path d="M281.1 80.80000000000001 L296.20000000000005 78.8 L300.1 82.2 L285.0 84.80000000000001Z" fill="#8e8e8e"/><path d="M282.0 81.2 L296.0 77.8 L297.6 80.6 L283.6 83.80000000000001Z" fill="#e4eff9"/><path d="M272.6 85.6 L290.6 91.6 L307.0 85.2 L307.0 92.2 L290.6 98.80000000000001 L272.6 92.80000000000001Z" fill="url(#lg17)" stroke="#9a9a9a" stroke-width="0.9" stroke-linejoin="round"/><path d="M275.0 88.80000000000001 L288.6 93.4 L288.6 95.4 L275.0 90.80000000000001Z" fill="#3a3a3a"/><path d="M290.6 91.6 V98.80000000000001" fill="none" stroke="#b0b0b0" stroke-width="0.8"/><ellipse cx="301.20000000000005" cy="82.6" rx="2.2" ry="1.4" fill="#4cc83c" stroke="#2c8c24" stroke-width=".5"/></g><defs><radialGradient id="rg19" cx="0.4" cy="0.35" r="0.7"><stop offset="0" stop-color="#ffffff"/><stop offset="0.6" stop-color="#bfe0f7"/><stop offset="1" stop-color="#9cc8ea"/></radialGradient></defs><path d="M296.09 87.27 L302.18 94.03" fill="none" stroke="#5a3a10" stroke-width="4.2" stroke-linecap="round"/><path d="M296.09 87.27 L302.18 94.03" fill="none" stroke="#f08a28" stroke-width="2.6" stroke-linecap="round"/><circle cx="290.80" cy="81.40" r="7.40" fill="url(#rg19)" stroke="#8aa4b8" stroke-width="1.6"/><defs><linearGradient id="lg20" x1="0" y1="0" x2="0" y2="1"><stop offset="0" stop-color="#9ad6ff"/><stop offset="0.5" stop-color="#3f9ef0"/><stop offset="1" stop-color="#1668c4"/></linearGradient></defs><g><path d="M400.8 79.8 L410.2 67.6 L410.2 74.4 C420.6 73.6 427.8 80.4 427.2 93.4 C424.2 86.6 419 84.6 410.2 85.2 L410.2 91.6 Z" fill="url(#lg20)" stroke="#1762b4" stroke-width="1.2" stroke-linejoin="round"/><path d="M403.4 79.6 L409 72.2 L409 76 C416 75.4 421.4 77.6 424 82.4" fill="none" stroke="#d4eeff" stroke-width="1.1" opacity=".8" stroke-linejoin="round"/></g><defs><linearGradient id="lg21" x1="0" y1="0" x2="0" y2="1"><stop offset="0" stop-color="#9ad6ff"/><stop offset="0.5" stop-color="#3f9ef0"/><stop offset="1" stop-color="#1668c4"/></linearGradient></defs><g transform="translate(874.4 0) scale(-1 1)"><path d="M400.8 79.8 L410.2 67.6 L410.2 74.4 C420.6 73.6 427.8 80.4 427.2 93.4 C424.2 86.6 419 84.6 410.2 85.2 L410.2 91.6 Z" fill="url(#lg21)" stroke="#1762b4" stroke-width="1.2" stroke-linejoin="round"/><path d="M403.4 79.6 L409 72.2 L409 76 C416 75.4 421.4 77.6 424 82.4" fill="none" stroke="#d4eeff" stroke-width="1.1" opacity=".8" stroke-linejoin="round"/></g><defs><linearGradient id="lg22" x1="0" y1="0" x2="0" y2="1"><stop offset="0" stop-color="#a6a6e2"/><stop offset="1" stop-color="#5c5ca6"/></linearGradient><linearGradient id="lg23" x1="0" y1="0" x2="0" y2="1"><stop offset="0" stop-color="#8fe04a"/><stop offset="1" stop-color="#3fa812"/></linearGradient><linearGradient id="lg24" x1="0" y1="0" x2="0" y2="1"><stop offset="0" stop-color="#cfe9ff"/><stop offset="0.6" stop-color="#f2fbd8"/><stop offset="0.62" stop-color="#3aa024"/><stop offset="1" stop-color="#1f7a14"/></linearGradient></defs><rect x="1184.40" y="64.40" width="23.60" height="30.60" rx="1.5" fill="#8c8c8c" stroke="#6a6a6a" stroke-width="0.8"/><rect x="1187.40" y="67.40" width="12.00" height="27.00" fill="url(#lg24)"/><path d="M1193.4 69.4 L1208.2 65 V94.6 L1193.4 99.2Z" fill="url(#lg22)" stroke="#4e4e94" stroke-width="0.8" stroke-linejoin="round"/><path d="M1196.4 71.6 L1205.4 69 V71.6 L1196.4 74.2Z" fill="#d6d6f6"/><circle cx="1196.40" cy="84.00" r="1.10" fill="#e6e6f6"/><path d="M1173.4 76.6 H1182.4 V71.6 L1191.8 80 L1182.4 88.6 V83.6 H1173.4Z" fill="url(#lg23)" stroke="#3c9c18" stroke-width="0.8" stroke-linejoin="round"/></svg>
<div style="left:517.4px;top:70px;width:160.2px;height:22.6px;background:linear-gradient(#bdbdbd 0%,#b2b2b2 45%,#9c9c9c 55%,#8c8c8c 100%);"></div>
<div style="left:521.3px;top:74.02px;font:normal 13.33px/13.33px 'Liberation Sans', sans-serif;color:#000;white-space:nowrap;letter-spacing:0.251px;transform:scaleY(1.1);transform-origin:0 84.65%;-webkit-text-stroke:.22px #000;">Modelo Estructural</div>
<div style="left:711.7px;top:74.02px;font:normal 13.33px/13.33px 'Liberation Sans', sans-serif;color:#000;white-space:nowrap;letter-spacing:-0.877px;transform:scaleY(1.1);transform-origin:0 84.65%;-webkit-text-stroke:.22px #000;">Piso</div>
<div style="left:745px;top:68px;width:121px;height:26px;background:#e1e1e1;border:1px solid #adadad;"></div>
<div style="left:750.4px;top:75.02px;font:normal 13.33px/13.33px 'Liberation Sans', sans-serif;color:#000;white-space:nowrap;letter-spacing:-0.19px;transform:scaleY(1.1);transform-origin:0 84.65%;-webkit-text-stroke:.22px #000;">1º piso</div>
<svg style="left:848.6px;top:76.0px;" width="12" height="10" viewBox="0 0 12 10"><path d="M1.2 3 L6 7.8 L10.8 3" fill="none" stroke="#4a4a4a" stroke-width="1.25"/></svg>
<div style="left:867.4px;top:69px;width:18.0px;height:10.8px;background:#f3f3f3;border:1px solid #adadad;"></div>
<div style="left:867.4px;top:82.3px;width:18.0px;height:10.6px;background:#f3f3f3;border:1px solid #adadad;"></div>
<svg style="left:867.4px;top:69px;" width="18.0" height="24" viewBox="0 0 18.0 24"><path d="M5.6 7.2 L9.0 3.6 L12.4 7.2Z M5.6 16.8 L9.0 20.4 L12.4 16.8Z" fill="#000"/></svg>
<div style="left:940.5px;top:74.02px;font:normal 13.33px/13.33px 'Liberation Sans', sans-serif;color:#000;white-space:nowrap;letter-spacing:-0.099px;transform:scaleY(1.1);transform-origin:0 84.65%;-webkit-text-stroke:.22px #000;">Fondo</div>
<div style="left:986px;top:68px;width:123px;height:26px;background:#e1e1e1;border:1px solid #adadad;"></div>
<div style="left:990px;top:75.02px;font:normal 13.33px/13.33px 'Liberation Sans', sans-serif;color:#000;white-space:nowrap;letter-spacing:-0.176px;transform:scaleY(1.1);transform-origin:0 84.65%;-webkit-text-stroke:.22px #000;">Ninguna</div>
<svg style="left:1091.6px;top:76.0px;" width="12" height="10" viewBox="0 0 12 10"><path d="M1.2 3 L6 7.8 L10.8 3" fill="none" stroke="#4a4a4a" stroke-width="1.25"/></svg>
<div style="left:1114.6px;top:69px;width:18.600000000000136px;height:10.8px;background:#f3f3f3;border:1px solid #adadad;"></div>
<div style="left:1114.6px;top:82.3px;width:18.600000000000136px;height:10.6px;background:#f3f3f3;border:1px solid #adadad;"></div>
<svg style="left:1114.6px;top:69px;" width="18.600000000000136" height="24" viewBox="0 0 18.600000000000136 24"><path d="M5.900000000000068 7.2 L9.300000000000068 3.6 L12.700000000000069 7.2Z M5.900000000000068 16.8 L9.300000000000068 20.4 L12.700000000000069 16.8Z" fill="#000"/></svg>
<!-- p61_row2 -->
<svg style="left:0px;top:105px;" width="1400" height="54" viewBox="0 105 1400 54"><defs><linearGradient id="lg25" x1="0" y1="0" x2="0" y2="1"><stop offset="0" stop-color="#fafafa"/><stop offset="0.7" stop-color="#e6e6e6"/><stop offset="1" stop-color="#bdbdbd"/></linearGradient></defs><path d="M31.5 118 H48.1 Q49.6 118 49.6 119.5 V146.3 Q49.6 147.8 48.1 147.8 H25.5 Q24 147.8 24 146.3 V125.5Z" fill="url(#lg25)" stroke="#6e6e6e" stroke-width="1.3" stroke-linejoin="round"/><path d="M24 125.5 L31.5 118 V125.5Z" fill="#5c5c5c" stroke="#4a4a4a" stroke-width="0.8" stroke-linejoin="round"/><rect x="24.80" y="144.20" width="24.00" height="3.00" rx="1" fill="#9a9a9a"/><text x="36.80" y="141.50" font-size="11.8" font-weight="bold" fill="#d9d9d9" stroke="#5c5c5c" stroke-width="1" text-anchor="middle" textLength="21.400000000000002" lengthAdjust="spacingAndGlyphs" opacity=".99">DWG</text><defs><linearGradient id="lg26" x1="0" y1="0" x2="0" y2="1"><stop offset="0" stop-color="#8fd0ff"/><stop offset="1" stop-color="#2f9af5"/></linearGradient></defs><path d="M42.7 115.3 H51 V122.6 H56.2 L46.8 132.2 L37.4 122.6 H42.7Z" fill="url(#lg26)" stroke="#1a78d6" stroke-width="1.2" stroke-linejoin="round"/><defs><linearGradient id="lg27" x1="0" y1="0" x2="0" y2="1"><stop offset="0" stop-color="#fafafa"/><stop offset="0.7" stop-color="#e6e6e6"/><stop offset="1" stop-color="#bdbdbd"/></linearGradient></defs><path d="M77.7 118 H94.30000000000001 Q95.80000000000001 118 95.80000000000001 119.5 V146.3 Q95.80000000000001 147.8 94.30000000000001 147.8 H71.7 Q70.2 147.8 70.2 146.3 V125.5Z" fill="url(#lg27)" stroke="#6e6e6e" stroke-width="1.3" stroke-linejoin="round"/><path d="M70.2 125.5 L77.7 118 V125.5Z" fill="#5c5c5c" stroke="#4a4a4a" stroke-width="0.8" stroke-linejoin="round"/><rect x="71.00" y="144.20" width="24.00" height="3.00" rx="1" fill="#9a9a9a"/><text x="83.00" y="141.50" font-size="11.8" font-weight="bold" fill="#d9d9d9" stroke="#5c5c5c" stroke-width="1" text-anchor="middle" textLength="21.400000000000002" lengthAdjust="spacingAndGlyphs" opacity=".99">DWG</text><ellipse cx="91.7" cy="126" rx="9.4" ry="5.4" fill="#eaf6ff" stroke="#0f6fc0" stroke-width="1.7"/><path d="M84.4 127.6 Q91 122 99 127.4" fill="none" stroke="#2fb0ee" stroke-width="1.6"/><circle cx="91.20" cy="124.80" r="3.50" fill="#1557b8"/><circle cx="91.20" cy="124.20" r="1.70" fill="#02030a"/><rect x="126.40" y="118.40" width="25.60" height="29.00" fill="#fff" stroke="#5f5f5f" stroke-width="1.2"/><path d="M130.67 118.4 V147.4 M134.93 118.4 V147.4 M139.20 118.4 V147.4 M143.47 118.4 V147.4 M147.73 118.4 V147.4 M126.4 122.54 H152.0 M126.4 126.69 H152.0 M126.4 130.83 H152.0 M126.4 134.97 H152.0 M126.4 139.11 H152.0 M126.4 143.26 H152.0 " fill="none" stroke="#858585" stroke-width="1.1"/><rect x="126.40" y="143.40" width="25.60" height="4.00" fill="#8a8a8a"/><path d="M141.90 128.80 L141.90 121.61 L143.50 121.61 L139.30 117.20 L135.10 121.61 L136.70 121.61 L136.70 128.80Z M142.90 135.00 L150.09 135.00 L150.09 136.60 L154.50 132.40 L150.09 128.20 L150.09 129.80 L142.90 129.80Z M136.70 136.00 L136.70 143.19 L135.10 143.19 L139.30 147.60 L143.50 143.19 L141.90 143.19 L141.90 136.00Z M135.70 129.80 L128.51 129.80 L128.51 128.20 L124.10 132.40 L128.51 136.60 L128.51 135.00 L135.70 135.00Z " fill="#7c7c7c" stroke="#2a2a2a" stroke-width="2.2" stroke-linejoin="round"/><defs><linearGradient id="lg28" x1="0" y1="0" x2="0" y2="1"><stop offset="0" stop-color="#fafafa"/><stop offset="0.7" stop-color="#e6e6e6"/><stop offset="1" stop-color="#bdbdbd"/></linearGradient></defs><path d="M180.1 118.2 H196.9 Q198.4 118.2 198.4 119.7 V146.3 Q198.4 147.8 196.9 147.8 H174.1 Q172.6 147.8 172.6 146.3 V125.7Z" fill="url(#lg28)" stroke="#6e6e6e" stroke-width="1.3" stroke-linejoin="round"/><path d="M172.6 125.7 L180.1 118.2 V125.7Z" fill="#5c5c5c" stroke="#4a4a4a" stroke-width="0.8" stroke-linejoin="round"/><rect x="173.40" y="144.20" width="24.20" height="3.00" rx="1" fill="#9a9a9a"/><text x="185.50" y="141.50" font-size="11.8" font-weight="bold" fill="#d9d9d9" stroke="#5c5c5c" stroke-width="1" text-anchor="middle" textLength="21.6" lengthAdjust="spacingAndGlyphs" opacity=".99">DWG</text><path d="M197.90 123.30 L197.90 117.02 L199.90 117.02 L196.40 113.70 L192.90 117.02 L194.90 117.02 L194.90 123.30Z M196.40 124.80 L202.68 124.80 L202.68 126.80 L206.00 123.30 L202.68 119.80 L202.68 121.80 L196.40 121.80Z M194.90 123.30 L194.90 129.57 L192.90 129.57 L196.40 132.90 L199.90 129.57 L197.90 129.57 L197.90 123.30Z M196.40 121.80 L190.12 121.80 L190.12 119.80 L186.80 123.30 L190.12 126.80 L190.12 124.80 L196.40 124.80Z " fill="#7b7b7b" stroke="#6c6c6c" stroke-width="0.6" stroke-linejoin="round" paint-order="stroke"/><defs><filter id="bf29" x="-10%" y="-10%" width="120%" height="120%"><feGaussianBlur stdDeviation=".55"/></filter></defs><g filter="url(#bf29)"><path d="M215 117.9 Q233.6 114.4 252.2 116.4 V138.4 Q235.46 141.9 215 137.4Z" fill="#5b5b5b" opacity=".93"/><rect x="216.60" y="119.19" width="2.28" height="3.40" fill="#fff" opacity="0.95"/><rect x="220.38" y="119.01" width="2.28" height="3.40" fill="#fff" opacity="0.95"/><rect x="224.16" y="118.84" width="2.28" height="3.40" fill="#fff" opacity="0.95"/><rect x="227.93" y="118.66" width="2.28" height="3.40" fill="#fff" opacity="0.95"/><rect x="231.71" y="118.49" width="2.28" height="3.40" fill="#fff" opacity="0.95"/><rect x="235.49" y="118.49" width="2.28" height="3.40" fill="#fff" opacity="0.59"/><rect x="239.27" y="118.66" width="2.28" height="3.40" fill="#fff" opacity="0.59"/><rect x="243.04" y="118.84" width="2.28" height="3.40" fill="#fff" opacity="0.59"/><rect x="246.82" y="119.01" width="2.28" height="3.40" fill="#fff" opacity="0.59"/><rect x="216.60" y="125.59" width="2.28" height="3.20" fill="#fff" opacity="0.80"/><rect x="220.38" y="125.41" width="2.28" height="3.20" fill="#fff" opacity="0.80"/><rect x="224.16" y="125.24" width="2.28" height="3.20" fill="#fff" opacity="0.80"/><rect x="227.93" y="125.06" width="2.28" height="3.20" fill="#fff" opacity="0.80"/><rect x="231.71" y="124.89" width="2.28" height="3.20" fill="#fff" opacity="0.80"/><rect x="235.49" y="124.89" width="2.28" height="3.20" fill="#fff" opacity="0.50"/><rect x="239.27" y="125.06" width="2.28" height="3.20" fill="#fff" opacity="0.50"/><rect x="243.04" y="125.24" width="2.28" height="3.20" fill="#fff" opacity="0.50"/><rect x="246.82" y="125.41" width="2.28" height="3.20" fill="#fff" opacity="0.50"/><rect x="216.60" y="133.59" width="2.28" height="3.00" fill="#fff" opacity="0.60"/><rect x="220.38" y="133.41" width="2.28" height="3.00" fill="#fff" opacity="0.60"/><rect x="224.16" y="133.24" width="2.28" height="3.00" fill="#fff" opacity="0.60"/><rect x="227.93" y="133.06" width="2.28" height="3.00" fill="#fff" opacity="0.21"/><rect x="231.71" y="132.89" width="2.28" height="3.00" fill="#fff" opacity="0.21"/><rect x="235.49" y="132.89" width="2.28" height="3.00" fill="#fff" opacity="0.13"/><rect x="239.27" y="133.06" width="2.28" height="3.00" fill="#fff" opacity="0.13"/><rect x="243.04" y="133.24" width="2.28" height="3.00" fill="#fff" opacity="0.13"/><rect x="246.82" y="133.41" width="2.28" height="3.00" fill="#fff" opacity="0.13"/><path d="M216.00 137.4 V146.90" fill="none" stroke="#6a6a6a" stroke-width="1.4" opacity=".85"/><path d="M221.03 137.4 V145.60" fill="none" stroke="#6a6a6a" stroke-width="1.4" opacity=".85"/><path d="M226.06 137.4 V144.30" fill="none" stroke="#6a6a6a" stroke-width="1.4" opacity=".85"/><path d="M231.09 137.4 V146.90" fill="none" stroke="#6a6a6a" stroke-width="1.4" opacity=".85"/><path d="M236.11 137.4 V145.60" fill="none" stroke="#6a6a6a" stroke-width="1.4" opacity=".85"/><path d="M241.14 137.4 V144.30" fill="none" stroke="#6a6a6a" stroke-width="1.4" opacity=".85"/><path d="M246.17 137.4 V146.90" fill="none" stroke="#6a6a6a" stroke-width="1.4" opacity=".85"/><path d="M251.20 137.4 V145.60" fill="none" stroke="#6a6a6a" stroke-width="1.4" opacity=".85"/></g><defs><linearGradient id="lg30" x1="0" y1="0" x2="0" y2="1"><stop offset="0" stop-color="#8bf04a"/><stop offset="1" stop-color="#35b012"/></linearGradient></defs><path d="M234 137 H243.4 V132.7 L252.4 141.3 L243.4 150 V145.6 H234Z" fill="url(#lg30)" stroke="#2c9a10" stroke-width="0.9" stroke-linejoin="round"/><defs><filter id="bf31" x="-10%" y="-10%" width="120%" height="120%"><feGaussianBlur stdDeviation=".55"/></filter></defs><g filter="url(#bf31)"><path d="M261.4 117.9 Q280.0 114.4 298.59999999999997 116.4 V138.4 Q281.85999999999996 141.9 261.4 137.4Z" fill="#5b5b5b" opacity=".93"/><rect x="263.00" y="119.19" width="2.28" height="3.40" fill="#fff" opacity="0.95"/><rect x="266.78" y="119.01" width="2.28" height="3.40" fill="#fff" opacity="0.95"/><rect x="270.56" y="118.84" width="2.28" height="3.40" fill="#fff" opacity="0.95"/><rect x="274.33" y="118.66" width="2.28" height="3.40" fill="#fff" opacity="0.95"/><rect x="278.11" y="118.49" width="2.28" height="3.40" fill="#fff" opacity="0.95"/><rect x="281.89" y="118.49" width="2.28" height="3.40" fill="#fff" opacity="0.59"/><rect x="285.67" y="118.66" width="2.28" height="3.40" fill="#fff" opacity="0.59"/><rect x="289.44" y="118.84" width="2.28" height="3.40" fill="#fff" opacity="0.59"/><rect x="293.22" y="119.01" width="2.28" height="3.40" fill="#fff" opacity="0.59"/><rect x="263.00" y="125.59" width="2.28" height="3.20" fill="#fff" opacity="0.80"/><rect x="266.78" y="125.41" width="2.28" height="3.20" fill="#fff" opacity="0.80"/><rect x="270.56" y="125.24" width="2.28" height="3.20" fill="#fff" opacity="0.80"/><rect x="274.33" y="125.06" width="2.28" height="3.20" fill="#fff" opacity="0.80"/><rect x="278.11" y="124.89" width="2.28" height="3.20" fill="#fff" opacity="0.80"/><rect x="281.89" y="124.89" width="2.28" height="3.20" fill="#fff" opacity="0.50"/><rect x="285.67" y="125.06" width="2.28" height="3.20" fill="#fff" opacity="0.50"/><rect x="289.44" y="125.24" width="2.28" height="3.20" fill="#fff" opacity="0.50"/><rect x="293.22" y="125.41" width="2.28" height="3.20" fill="#fff" opacity="0.50"/><rect x="263.00" y="133.59" width="2.28" height="3.00" fill="#fff" opacity="0.60"/><rect x="266.78" y="133.41" width="2.28" height="3.00" fill="#fff" opacity="0.60"/><rect x="270.56" y="133.24" width="2.28" height="3.00" fill="#fff" opacity="0.60"/><rect x="274.33" y="133.06" width="2.28" height="3.00" fill="#fff" opacity="0.21"/><rect x="278.11" y="132.89" width="2.28" height="3.00" fill="#fff" opacity="0.21"/><rect x="281.89" y="132.89" width="2.28" height="3.00" fill="#fff" opacity="0.13"/><rect x="285.67" y="133.06" width="2.28" height="3.00" fill="#fff" opacity="0.13"/><rect x="289.44" y="133.24" width="2.28" height="3.00" fill="#fff" opacity="0.13"/><rect x="293.22" y="133.41" width="2.28" height="3.00" fill="#fff" opacity="0.13"/><path d="M262.40 137.4 V146.90" fill="none" stroke="#6a6a6a" stroke-width="1.4" opacity=".85"/><path d="M267.43 137.4 V145.60" fill="none" stroke="#6a6a6a" stroke-width="1.4" opacity=".85"/><path d="M272.46 137.4 V144.30" fill="none" stroke="#6a6a6a" stroke-width="1.4" opacity=".85"/><path d="M277.49 137.4 V146.90" fill="none" stroke="#6a6a6a" stroke-width="1.4" opacity=".85"/><path d="M282.51 137.4 V145.60" fill="none" stroke="#6a6a6a" stroke-width="1.4" opacity=".85"/><path d="M287.54 137.4 V144.30" fill="none" stroke="#6a6a6a" stroke-width="1.4" opacity=".85"/><path d="M292.57 137.4 V146.90" fill="none" stroke="#6a6a6a" stroke-width="1.4" opacity=".85"/><path d="M297.60 137.4 V145.60" fill="none" stroke="#6a6a6a" stroke-width="1.4" opacity=".85"/></g><defs><linearGradient id="lg32" x1="0" y1="0" x2="0" y2="1"><stop offset="0" stop-color="#4aa0ea"/><stop offset="1" stop-color="#0c55a8"/></linearGradient></defs><path d="M282 143 A8 8 0 0 1 295.6 136.4 L297.8 134 L298.6 141.6 L291 141.2 L293 139 A4.6 4.6 0 0 0 285.6 143Z" fill="url(#lg32)" stroke="#0b4e9c" stroke-width="0.7" stroke-linejoin="round"/><path d="M298 143.4 A8 8 0 0 1 284.4 149.6 L282.2 151.8 L281.4 144.4 L289 144.8 L287 147 A4.6 4.6 0 0 0 294.4 143.4Z" fill="url(#lg32)" stroke="#0b4e9c" stroke-width="0.7" stroke-linejoin="round"/><rect x="324.50" y="107.50" width="50.00" height="47.00" fill="none" stroke="#80000f" stroke-width="5"/><rect x="327.00" y="110.00" width="45.00" height="42.00" fill="#c1dcf3" stroke="#a8d8ff" stroke-width="1"/><defs><linearGradient id="lg33" x1="0" y1="0" x2="0" y2="1"><stop offset="0" stop-color="#7ad8fb"/><stop offset="1" stop-color="#25aee6"/></linearGradient></defs><path d="M336.3 121.2 L344.3 126.0 L352.3 121.2 V122.4 L344.3 127.2 L336.3 122.4Z" fill="#157fa8"/><path d="M336.3 121.2 L344.3 116.4 L352.3 121.2 L344.3 126.0Z" fill="url(#lg33)" stroke="#1b93c4" stroke-width="0.7" stroke-linejoin="round"/><defs><linearGradient id="lg34" x1="0" y1="0" x2="0" y2="1"><stop offset="0" stop-color="#b5b5b5"/><stop offset="1" stop-color="#6e6e6e"/></linearGradient></defs><path d="M346.4 122.4 L365.6 134.4 L358.2 137.4 L363.6 146 L358.4 148.8 L353.2 141.4 L346.4 144.8Z" fill="url(#lg34)" stroke="#2c2c2c" stroke-width="1.7" stroke-linejoin="round"/><path d="M396.80 129.50 L396.80 121.62 L398.90 121.62 L394.40 116.90 L389.90 121.62 L392.00 121.62 L392.00 129.50Z M397.40 134.90 L405.27 134.90 L405.27 137.00 L410.00 132.50 L405.27 128.00 L405.27 130.10 L397.40 130.10Z M392.00 135.50 L392.00 143.38 L389.90 143.38 L394.40 148.10 L398.90 143.38 L396.80 143.38 L396.80 135.50Z M391.40 130.10 L383.52 130.10 L383.52 128.00 L378.80 132.50 L383.52 137.00 L383.52 134.90 L391.40 134.90Z " fill="#7e7e7e" stroke="#2c2c2c" stroke-width="2.0" stroke-linejoin="round"/><defs><linearGradient id="lg35" x1="0" y1="0" x2="0" y2="1"><stop offset="0" stop-color="#7ad8fb"/><stop offset="1" stop-color="#25aee6"/></linearGradient></defs><path d="M386.4 132.9 L394.4 137.6 L402.4 132.9 V134.3 L394.4 139.0 L386.4 134.3Z" fill="#157fa8"/><path d="M386.4 132.9 L394.4 128.20000000000002 L402.4 132.9 L394.4 137.6Z" fill="url(#lg35)" stroke="#1b93c4" stroke-width="0.7" stroke-linejoin="round"/><path d="M452.10 128.75 A12.4 12.4 0 0 0 430.83 125.77" fill="none" stroke="#2a2a2a" stroke-width="6.8"/><path d="M452.10 128.75 A12.4 12.4 0 0 0 430.83 125.77" fill="none" stroke="#9a9a9a" stroke-width="3.4"/><path d="M426.42 122.32 L428.32 135.13 L435.24 129.21Z" fill="#9a9a9a" stroke="#2a2a2a" stroke-width="1.5" stroke-linejoin="round"/><path d="M452.10 128.75 A12.4 12.4 0 0 0 430.83 125.77" fill="none" stroke="#9a9a9a" stroke-width="3.4"/><path d="M428.92 138.12 A12.6 12.6 0 0 0 450.53 141.16" fill="none" stroke="#262626" stroke-width="7.199999999999999"/><path d="M428.92 138.12 A12.6 12.6 0 0 0 450.53 141.16" fill="none" stroke="#5e5e5e" stroke-width="3.8"/><path d="M454.94 144.61 L453.08 131.65 L446.12 137.71Z" fill="#5e5e5e" stroke="#262626" stroke-width="1.5" stroke-linejoin="round"/><path d="M428.92 138.12 A12.6 12.6 0 0 0 450.53 141.16" fill="none" stroke="#5e5e5e" stroke-width="3.8"/><defs><linearGradient id="lg36" x1="0" y1="0" x2="0" y2="1"><stop offset="0" stop-color="#7ad8fb"/><stop offset="1" stop-color="#25aee6"/></linearGradient></defs><path d="M432.7 133 L440.5 137.6 L448.3 133 V134.2 L440.5 138.79999999999998 L432.7 134.2Z" fill="#157fa8"/><path d="M432.7 133 L440.5 128.4 L448.3 133 L440.5 137.6Z" fill="url(#lg36)" stroke="#1b93c4" stroke-width="0.7" stroke-linejoin="round"/><defs><linearGradient id="lg37" x1="0" y1="0" x2="0" y2="1"><stop offset="0" stop-color="#7fd6fa"/><stop offset="1" stop-color="#3cb6ec"/></linearGradient></defs><path d="M470.4 134.4 L486 124 L502.4 131 L502.4 133 L484.4 142.4 L470.4 136.4Z" fill="#1f86ae"/><path d="M470.4 134.4 L486 124 L502.4 131 L484.4 140.4Z" fill="url(#lg37)" stroke="#2b93be" stroke-width="0.8" stroke-linejoin="round"/><circle cx="493.60" cy="139.60" r="8.70" fill="#e8b8b8" opacity=".2"/><circle cx="493.60" cy="139.60" r="8.90" fill="none" stroke="#c23a3e" stroke-width="3.2" opacity=".93"/><path d="M487.4 133.4 L499.8 145.8" fill="none" stroke="#c23a3e" stroke-width="3.2" opacity=".93"/><defs><filter id="bf38" x="-10%" y="-10%" width="120%" height="120%"><feGaussianBlur stdDeviation=".55"/></filter></defs><g filter="url(#bf38)"><path d="M542.4 122.7 Q561.4 119.2 580.4 121.2 V145.7 Q563.3 149.2 542.4 144.7Z" fill="#5b5b5b" opacity=".93"/><rect x="542.40" y="129.00" width="38.00" height="6.05" fill="#9a3434" opacity=".75"/><rect x="544.00" y="123.99" width="2.37" height="3.40" fill="#fff" opacity="0.95"/><rect x="547.87" y="123.81" width="2.37" height="3.40" fill="#fff" opacity="0.95"/><rect x="551.73" y="123.64" width="2.37" height="3.40" fill="#fff" opacity="0.95"/><rect x="555.60" y="123.46" width="2.37" height="3.40" fill="#fff" opacity="0.95"/><rect x="559.47" y="123.29" width="2.37" height="3.40" fill="#fff" opacity="0.95"/><rect x="563.33" y="123.29" width="2.37" height="3.40" fill="#fff" opacity="0.59"/><rect x="567.20" y="123.46" width="2.37" height="3.40" fill="#fff" opacity="0.59"/><rect x="571.07" y="123.64" width="2.37" height="3.40" fill="#fff" opacity="0.59"/><rect x="574.93" y="123.81" width="2.37" height="3.40" fill="#fff" opacity="0.59"/><rect x="544.00" y="131.39" width="2.37" height="3.20" fill="#fff" opacity="0.80"/><rect x="547.87" y="131.21" width="2.37" height="3.20" fill="#fff" opacity="0.80"/><rect x="551.73" y="131.04" width="2.37" height="3.20" fill="#fff" opacity="0.80"/><rect x="555.60" y="130.86" width="2.37" height="3.20" fill="#fff" opacity="0.80"/><rect x="559.47" y="130.69" width="2.37" height="3.20" fill="#fff" opacity="0.80"/><rect x="563.33" y="130.69" width="2.37" height="3.20" fill="#fff" opacity="0.50"/><rect x="567.20" y="130.86" width="2.37" height="3.20" fill="#fff" opacity="0.50"/><rect x="571.07" y="131.04" width="2.37" height="3.20" fill="#fff" opacity="0.50"/><rect x="574.93" y="131.21" width="2.37" height="3.20" fill="#fff" opacity="0.50"/><rect x="544.00" y="140.19" width="2.37" height="3.00" fill="#fff" opacity="0.60"/><rect x="547.87" y="140.01" width="2.37" height="3.00" fill="#fff" opacity="0.60"/><rect x="551.73" y="139.84" width="2.37" height="3.00" fill="#fff" opacity="0.60"/><rect x="555.60" y="139.66" width="2.37" height="3.00" fill="#fff" opacity="0.21"/><rect x="559.47" y="139.49" width="2.37" height="3.00" fill="#fff" opacity="0.21"/><rect x="563.33" y="139.49" width="2.37" height="3.00" fill="#fff" opacity="0.13"/><rect x="567.20" y="139.66" width="2.37" height="3.00" fill="#fff" opacity="0.13"/><rect x="571.07" y="139.84" width="2.37" height="3.00" fill="#fff" opacity="0.13"/><rect x="574.93" y="140.01" width="2.37" height="3.00" fill="#fff" opacity="0.13"/></g><defs><radialGradient id="rg39" cx="0.4" cy="0.35" r="0.7"><stop offset="0" stop-color="#ffffff"/><stop offset="0.6" stop-color="#cfe3f2"/><stop offset="1" stop-color="#9cc8ea"/></radialGradient></defs><path d="M571.88 143.18 L577.61 148.91" fill="none" stroke="#5a3a10" stroke-width="4.2" stroke-linecap="round"/><path d="M571.88 143.18 L577.61 148.91" fill="none" stroke="#c9962c" stroke-width="2.6" stroke-linecap="round"/><circle cx="567.00" cy="138.30" r="6.40" fill="url(#rg39)" stroke="#2f2f2f" stroke-width="1.6"/><rect x="599.00" y="114.00" width="37.00" height="37.40" fill="#fff"/><defs><linearGradient id="lg40" x1="0" y1="0" x2="0" y2="1"><stop offset="0" stop-color="#e3eeff"/><stop offset="0.25" stop-color="#ffffff"/><stop offset="1" stop-color="#ffffff"/></linearGradient></defs><rect x="601.00" y="115.80" width="32.60" height="32.60" rx="3.6" fill="#5a5a6a" opacity=".55"/><rect x="600.40" y="115.20" width="32.60" height="32.60" rx="3.6" fill="url(#lg40)" stroke="#9dbdf0" stroke-width="1.5"/><path d="M633 119.6 V144.6 Q633 147.8 629.8 147.8 H604" fill="none" stroke="#6d7bb0" stroke-width="1.6"/><rect x="605.00" y="120.20" width="22.40" height="4.40" fill="#66778a"/><path d="M607 120.4 V124.4 M610.6 120.4 V122.4 M614.4 120.4 V124.4 M618 120.4 V122.6 M622 120.4 V124.4 M625 120.4 V122.4" fill="none" stroke="#a9b6c4" stroke-width="0.8"/><path d="M605 127.7 H607 M609.4 127.7 H617 M619 127.7 H625 M605 131.4 H620 M621.8 131.4 H623.6 M625.2 131.4 H627.6" fill="none" stroke="#7c8c9e" stroke-width="2.1"/><defs><filter id="gf41" x="-10%" y="-10%" width="120%" height="120%"><feGaussianBlur stdDeviation=".35"/></filter></defs><g filter="url(#gf41)"><path d="M599.4 136.6 Q600.4 133.6 604.6 134.4 L611.6 137.6 Q613.6 134 617.6 135 L626.6 139.6 L626.2 142.4 L620 141.6 L615.6 144.6 L608.4 146.4 L602.4 141.6Z" fill="#6a6a6a" opacity=".9"/><path d="M600.6 136 L609 139.6 M606.6 134.4 L619.6 139" fill="none" stroke="#d9d9d9" stroke-width="1.5" stroke-linecap="round"/><path d="M599.6 137.4 Q599 141 603.4 143.4 L608 146" fill="none" stroke="#3a3a3a" stroke-width="1.8" stroke-linecap="round"/><path d="M609 133 L618 136 L626.8 140.6" fill="none" stroke="#444" stroke-width="1.5" stroke-linecap="round"/><circle cx="611.60" cy="143.80" r="3.60" fill="#8fc6fb" stroke="#3a3a3a" stroke-width="1.2"/><circle cx="622.80" cy="142.30" r="3.20" fill="#93c8fb" stroke="#3a3a3a" stroke-width="1.2"/><circle cx="610.80" cy="142.60" r="1.30" fill="#d8ecff"/><circle cx="622.20" cy="141.40" r="1.10" fill="#d8ecff"/><path d="M606 148.4 Q611 150.6 615 148.2" fill="none" stroke="#555" stroke-width="1.6" opacity=".8"/></g><defs><linearGradient id="lg42" x1="0" y1="0" x2="0" y2="1"><stop offset="0" stop-color="#2d84f2"/><stop offset="1" stop-color="#0a3aa8"/></linearGradient><linearGradient id="lg43" x1="0" y1="0" x2="0" y2="1"><stop offset="0" stop-color="#f6c600"/><stop offset="0.6" stop-color="#f2c400"/><stop offset="1" stop-color="#d9a400"/></linearGradient><radialGradient id="rg44" cx="0.5" cy="0.5" r="0.5"><stop offset="0" stop-color="#ffffff"/><stop offset="0.28" stop-color="#ffe4a6"/><stop offset="0.6" stop-color="#ffb437"/><stop offset="1" stop-color="#ffb437"/></radialGradient></defs><path d="M655.4 130.6 L675.6 138 L665.4 148.8 Q656 147.6 646.4 144.2 Q652.6 138.4 655.4 130.6Z" fill="url(#lg43)" stroke="#c99300" stroke-width="0.6" stroke-linejoin="round"/><path d="M653.4 141.2 L651 145 M658 142.4 L655.8 146.6 M662.6 143.8 L660.8 147.6 M666.4 141.4 L664.6 144.6" fill="none" stroke="#b98700" stroke-width="0.9" opacity=".6"/><path d="M656.6 128.2 L677 135 L675.6 138.2 L655.4 130.8Z" fill="#cfcfcf" stroke="#a3a3a3" stroke-width="0.5"/><path d="M659.8 128.6 Q663.4 124.6 667.4 123.4 Q669.8 121.6 670.4 118 Q671.4 113.6 674 113.8 Q677.2 114.6 676.2 118.6 Q674.6 122 675.2 125.6 Q677.2 128.6 678.8 131 Q679.2 133.6 676.8 135.4Z" fill="url(#lg42)" stroke="#0a3a9a" stroke-width="0.6" stroke-linejoin="round"/><ellipse cx="673.6" cy="116.6" rx="1" ry="1.6" fill="#0a3a9a" opacity=".7"/><circle cx="654.20" cy="123.00" r="5.60" fill="url(#rg44)" opacity=".9"/><circle cx="654.20" cy="123.00" r="3.40" fill="none" stroke="#ffa41c" stroke-width="1.6" opacity=".65"/><rect x="695.40" y="118.60" width="25.20" height="29.20" fill="#f7f7f7" stroke="#5c5c5c" stroke-width="1.2"/><path d="M700.44 118.6 V147.79999999999998 M705.48 118.6 V147.79999999999998 M710.52 118.6 V147.79999999999998 M715.56 118.6 V147.79999999999998 M695.4 123.47 H720.6 M695.4 128.33 H720.6 M695.4 133.20 H720.6 M695.4 138.07 H720.6 M695.4 142.93 H720.6 " fill="none" stroke="#777" stroke-width="1.2"/><rect x="695.40" y="143.20" width="25.20" height="4.60" fill="#8d8d8d"/><rect x="711.00" y="119.20" width="4.40" height="4.20" fill="#2f95ff"/><rect x="696.00" y="128.80" width="4.40" height="4.20" fill="#2f95ff"/><rect x="701.00" y="138.60" width="4.40" height="4.20" fill="#1f86ff"/><text x="699.6" y="125.2" font-size="13" font-weight="bold" text-anchor="middle" fill="#6ccaf8" stroke="#22a6ee" stroke-width="2.6" stroke-linejoin="round" paint-order="stroke">1</text><text x="720.8" y="127.4" font-size="13" font-weight="bold" text-anchor="middle" fill="#6ccaf8" stroke="#22a6ee" stroke-width="2.6" stroke-linejoin="round" paint-order="stroke">3</text><text x="711.6" y="148.8" font-size="13" font-weight="bold" text-anchor="middle" fill="#6ccaf8" stroke="#22a6ee" stroke-width="2.6" stroke-linejoin="round" paint-order="stroke">2</text><rect x="751.40" y="118.20" width="25.60" height="29.40" fill="#f7f7f7" stroke="#5c5c5c" stroke-width="1.2"/><path d="M756.52 118.2 V147.6 M761.64 118.2 V147.6 M766.76 118.2 V147.6 M771.88 118.2 V147.6 M751.4 123.10 H777.0 M751.4 128.00 H777.0 M751.4 132.90 H777.0 M751.4 137.80 H777.0 M751.4 142.70 H777.0 " fill="none" stroke="#777" stroke-width="1.2"/><rect x="751.40" y="143.00" width="25.60" height="4.60" fill="#8d8d8d"/><defs><linearGradient id="lg45" x1="0" y1="0" x2="0" y2="1"><stop offset="0" stop-color="#3fcb7e"/><stop offset="1" stop-color="#1f9a4f"/></linearGradient></defs><path d="M759 124.6 L762.6 121.2 L768.4 128.6 L779.6 115.2 L784.2 119.6 L768.8 138.2Z" fill="url(#lg45)" stroke="#1c8a46" stroke-width="0.8" stroke-linejoin="round"/><defs><filter id="bf46" x="-10%" y="-10%" width="120%" height="120%"><feGaussianBlur stdDeviation=".55"/></filter></defs><g filter="url(#bf46)"><path d="M803.8 116.9 Q822.3 113.4 840.8 115.4 V136.4 Q824.15 139.9 803.8 135.4Z" fill="#5b5b5b" opacity=".93"/><path d="M803.8 116.9 Q822.3 113.4 840.8 115.4 V118.60000000000001 Q822.3 116.80000000000001 803.8 120.0Z" fill="#8c3a3a" opacity=".9"/><rect x="805.40" y="118.19" width="2.26" height="3.40" fill="#fff" opacity="0.95"/><rect x="809.16" y="118.01" width="2.26" height="3.40" fill="#fff" opacity="0.95"/><rect x="812.91" y="117.84" width="2.26" height="3.40" fill="#fff" opacity="0.95"/><rect x="816.67" y="117.66" width="2.26" height="3.40" fill="#fff" opacity="0.95"/><rect x="820.42" y="117.49" width="2.26" height="3.40" fill="#fff" opacity="0.95"/><rect x="824.18" y="117.49" width="2.26" height="3.40" fill="#fff" opacity="0.59"/><rect x="827.93" y="117.66" width="2.26" height="3.40" fill="#fff" opacity="0.59"/><rect x="831.69" y="117.84" width="2.26" height="3.40" fill="#fff" opacity="0.59"/><rect x="835.44" y="118.01" width="2.26" height="3.40" fill="#fff" opacity="0.59"/><rect x="805.40" y="124.19" width="2.26" height="3.20" fill="#fff" opacity="0.80"/><rect x="809.16" y="124.01" width="2.26" height="3.20" fill="#fff" opacity="0.80"/><rect x="812.91" y="123.84" width="2.26" height="3.20" fill="#fff" opacity="0.80"/><rect x="816.67" y="123.66" width="2.26" height="3.20" fill="#fff" opacity="0.80"/><rect x="820.42" y="123.49" width="2.26" height="3.20" fill="#fff" opacity="0.80"/><rect x="824.18" y="123.49" width="2.26" height="3.20" fill="#fff" opacity="0.50"/><rect x="827.93" y="123.66" width="2.26" height="3.20" fill="#fff" opacity="0.50"/><rect x="831.69" y="123.84" width="2.26" height="3.20" fill="#fff" opacity="0.50"/><rect x="835.44" y="124.01" width="2.26" height="3.20" fill="#fff" opacity="0.50"/><rect x="805.40" y="131.87" width="2.26" height="3.00" fill="#fff" opacity="0.60"/><rect x="809.16" y="131.69" width="2.26" height="3.00" fill="#fff" opacity="0.60"/><rect x="812.91" y="131.52" width="2.26" height="3.00" fill="#fff" opacity="0.60"/><rect x="816.67" y="131.34" width="2.26" height="3.00" fill="#fff" opacity="0.21"/><rect x="820.42" y="131.17" width="2.26" height="3.00" fill="#fff" opacity="0.21"/><rect x="824.18" y="131.17" width="2.26" height="3.00" fill="#fff" opacity="0.13"/><rect x="827.93" y="131.34" width="2.26" height="3.00" fill="#fff" opacity="0.13"/><rect x="831.69" y="131.52" width="2.26" height="3.00" fill="#fff" opacity="0.13"/><rect x="835.44" y="131.69" width="2.26" height="3.00" fill="#fff" opacity="0.13"/><path d="M804.80 135.4 V144.90" fill="none" stroke="#6a6a6a" stroke-width="1.4" opacity=".85"/><path d="M809.80 135.4 V143.60" fill="none" stroke="#6a6a6a" stroke-width="1.4" opacity=".85"/><path d="M814.80 135.4 V142.30" fill="none" stroke="#6a6a6a" stroke-width="1.4" opacity=".85"/><path d="M819.80 135.4 V144.90" fill="none" stroke="#6a6a6a" stroke-width="1.4" opacity=".85"/><path d="M824.80 135.4 V143.60" fill="none" stroke="#6a6a6a" stroke-width="1.4" opacity=".85"/><path d="M829.80 135.4 V142.30" fill="none" stroke="#6a6a6a" stroke-width="1.4" opacity=".85"/><path d="M834.80 135.4 V144.90" fill="none" stroke="#6a6a6a" stroke-width="1.4" opacity=".85"/><path d="M839.80 135.4 V143.60" fill="none" stroke="#6a6a6a" stroke-width="1.4" opacity=".85"/></g><rect x="830.60" y="133.40" width="9.40" height="14.00" rx="0.8" fill="#9a7ccc" stroke="#4a3a8a" stroke-width="0.9"/><rect x="824.20" y="138.20" width="11.00" height="11.60" fill="#000" opacity=".85"/><defs><linearGradient id="lg47" x1="0" y1="0" x2="0" y2="1"><stop offset="0" stop-color="#f4f8ff"/><stop offset="1" stop-color="#9fb4dc"/></linearGradient></defs><rect x="823.20" y="136.00" width="10.80" height="12.60" rx="0.8" fill="url(#lg47)" stroke="#5a6ea8" stroke-width="0.9"/><rect x="857.50" y="111.80" width="138.00" height="43.00" fill="#e1e1e1" stroke="#adadad" stroke-width="1"/><defs><radialGradient id="rg48" cx="0.5" cy="0.35" r="0.7"><stop offset="0" stop-color="#7cc6ff"/><stop offset="0.55" stop-color="#2f8fe6"/><stop offset="1" stop-color="#0f5fc0"/></radialGradient><linearGradient id="lg49" x1="0" y1="0" x2="0" y2="1"><stop offset="0" stop-color="#f4f4f4"/><stop offset="0.5" stop-color="#cfcfcf"/><stop offset="1" stop-color="#8f8f8f"/></linearGradient></defs><circle cx="878.00" cy="133.20" r="15.40" fill="url(#lg49)" stroke="#a2a2a2" stroke-width="0.6"/><circle cx="878.00" cy="133.20" r="12.32" fill="url(#rg48)"/><text x="878.00" y="141.79" font-size="23.9" font-weight="bold" fill="#fff" text-anchor="middle">?</text><defs><radialGradient id="rg50" cx="0.5" cy="0.35" r="0.7"><stop offset="0" stop-color="#8fe060"/><stop offset="0.55" stop-color="#2aa818"/><stop offset="1" stop-color="#0c7a08"/></radialGradient><linearGradient id="lg51" x1="0" y1="0" x2="0" y2="1"><stop offset="0" stop-color="#f4f4f4"/><stop offset="0.5" stop-color="#cfcfcf"/><stop offset="1" stop-color="#8f8f8f"/></linearGradient></defs><circle cx="1030.00" cy="132.60" r="15.80" fill="url(#lg51)" stroke="#a2a2a2" stroke-width="0.6"/><circle cx="1030.00" cy="132.60" r="12.64" fill="url(#rg50)"/><text x="1030.00" y="141.42" font-size="24.5" font-weight="bold" fill="#fff" text-anchor="middle">?</text></svg>
<div style="left:910px;top:126.06px;font:normal 16px/16px 'Liberation Sans', sans-serif;color:#000;white-space:nowrap;letter-spacing:-0.025px;white-space:pre;word-spacing:3px;">How To...</div>
<div style="left:1074.6px;top:119px;width:300px;height:25.6px;background:#e1e1e1;border:1px solid #adadad;"></div>
<div style="left:1079.2px;top:126.22px;font:normal 13.33px/13.33px 'Liberation Sans', sans-serif;color:#000;white-space:nowrap;letter-spacing:0.003px;transform:scaleY(1.1);transform-origin:0 84.65%;-webkit-text-stroke:.22px #000;">Ver Todo</div>
<svg style="left:1357px;top:127px;" width="12" height="10" viewBox="0 0 12 10"><path d="M1.2 2.6 L6 7.4 L10.8 2.6" fill="none" stroke="#4a4a4a" stroke-width="1.25"/></svg>
<!-- p62_row3 -->
<svg style="left:0px;top:158px;" width="760" height="54" viewBox="0 158 760 54"><rect x="21.60" y="167.00" width="34.20" height="33.80" fill="#c4cac7" stroke="#2f2f2f" stroke-width="1.4"/><rect x="25.40" y="171.00" width="26.60" height="26.80" rx="3.6" fill="#8b8b8b" stroke="#9c0a0a" stroke-width="2.2"/><circle cx="27.60" cy="173.20" r="1.50" fill="#a40c0c"/><circle cx="27.60" cy="195.60" r="1.50" fill="#a40c0c"/><circle cx="38.70" cy="173.20" r="1.50" fill="#a40c0c"/><circle cx="38.70" cy="195.60" r="1.50" fill="#a40c0c"/><circle cx="49.80" cy="173.20" r="1.50" fill="#a40c0c"/><circle cx="49.80" cy="195.60" r="1.50" fill="#a40c0c"/><circle cx="27.60" cy="184.40" r="1.50" fill="#a40c0c"/><circle cx="49.80" cy="184.40" r="1.50" fill="#a40c0c"/><path d="M43.4 176 L47.4 172.4 M46 179 L50.4 174.4" fill="none" stroke="#9c0a0a" stroke-width="1.3"/><path d="M69.4 166.9 H85.8 V183.5 H102 V200.8 H69.4Z" fill="#c4cac7" stroke="#222" stroke-width="1.5"/><rect x="71.80" y="169.60" width="11.20" height="28.60" rx="2.2" fill="#8b8b8b" stroke="#9c0a0a" stroke-width="1.6"/><rect x="71.80" y="186.40" width="27.60" height="11.80" rx="2.2" fill="#8b8b8b" stroke="#9c0a0a" stroke-width="1.6"/><path d="M71.8 186.4 H83 V198.2" fill="none" stroke="#9c0a0a" stroke-width="1.2" opacity=".8"/><circle cx="73.60" cy="171.40" r="1.10" fill="#a40c0c"/><circle cx="73.60" cy="196.40" r="1.10" fill="#a40c0c"/><circle cx="77.40" cy="171.40" r="1.10" fill="#a40c0c"/><circle cx="77.40" cy="196.40" r="1.10" fill="#a40c0c"/><circle cx="81.20" cy="171.40" r="1.10" fill="#a40c0c"/><circle cx="81.20" cy="196.40" r="1.10" fill="#a40c0c"/><circle cx="73.60" cy="179.73" r="1.10" fill="#a40c0c"/><circle cx="81.20" cy="179.73" r="1.10" fill="#a40c0c"/><circle cx="73.60" cy="188.07" r="1.10" fill="#a40c0c"/><circle cx="81.20" cy="188.07" r="1.10" fill="#a40c0c"/><circle cx="73.60" cy="188.20" r="1.10" fill="#a40c0c"/><circle cx="73.60" cy="196.40" r="1.10" fill="#a40c0c"/><circle cx="79.60" cy="188.20" r="1.10" fill="#a40c0c"/><circle cx="79.60" cy="196.40" r="1.10" fill="#a40c0c"/><circle cx="85.60" cy="188.20" r="1.10" fill="#a40c0c"/><circle cx="85.60" cy="196.40" r="1.10" fill="#a40c0c"/><circle cx="91.60" cy="188.20" r="1.10" fill="#a40c0c"/><circle cx="91.60" cy="196.40" r="1.10" fill="#a40c0c"/><circle cx="97.60" cy="188.20" r="1.10" fill="#a40c0c"/><circle cx="97.60" cy="196.40" r="1.10" fill="#a40c0c"/><path d="M121.9 169.4 H139.4 V183.5 H148.3 V200.8 H114.2 V183.5 H121.9Z" fill="#c4cac7" stroke="#222" stroke-width="1.5"/><rect x="124.60" y="171.80" width="12.40" height="26.40" rx="2.2" fill="#8b8b8b" stroke="#9c0a0a" stroke-width="1.6"/><rect x="116.60" y="186.00" width="29.40" height="12.20" rx="2.2" fill="#8b8b8b" stroke="#9c0a0a" stroke-width="1.6"/><path d="M124.6 186 V198.2 M137 186 V198.2 M124.6 186 H137" fill="none" stroke="#9c0a0a" stroke-width="1.2" opacity=".8"/><circle cx="126.40" cy="173.60" r="1.10" fill="#a40c0c"/><circle cx="126.40" cy="196.40" r="1.10" fill="#a40c0c"/><circle cx="130.80" cy="173.60" r="1.10" fill="#a40c0c"/><circle cx="130.80" cy="196.40" r="1.10" fill="#a40c0c"/><circle cx="135.20" cy="173.60" r="1.10" fill="#a40c0c"/><circle cx="135.20" cy="196.40" r="1.10" fill="#a40c0c"/><circle cx="126.40" cy="181.20" r="1.10" fill="#a40c0c"/><circle cx="135.20" cy="181.20" r="1.10" fill="#a40c0c"/><circle cx="126.40" cy="188.80" r="1.10" fill="#a40c0c"/><circle cx="135.20" cy="188.80" r="1.10" fill="#a40c0c"/><circle cx="118.40" cy="187.80" r="1.10" fill="#a40c0c"/><circle cx="118.40" cy="196.40" r="1.10" fill="#a40c0c"/><circle cx="123.56" cy="187.80" r="1.10" fill="#a40c0c"/><circle cx="123.56" cy="196.40" r="1.10" fill="#a40c0c"/><circle cx="128.72" cy="187.80" r="1.10" fill="#a40c0c"/><circle cx="128.72" cy="196.40" r="1.10" fill="#a40c0c"/><circle cx="133.88" cy="187.80" r="1.10" fill="#a40c0c"/><circle cx="133.88" cy="196.40" r="1.10" fill="#a40c0c"/><circle cx="139.04" cy="187.80" r="1.10" fill="#a40c0c"/><circle cx="139.04" cy="196.40" r="1.10" fill="#a40c0c"/><circle cx="144.20" cy="187.80" r="1.10" fill="#a40c0c"/><circle cx="144.20" cy="196.40" r="1.10" fill="#a40c0c"/><circle cx="177.40" cy="183.80" r="17.20" fill="#d0d3d1" stroke="#555" stroke-width="1.1"/><circle cx="177.40" cy="183.80" r="14.20" fill="#8b8b8b" stroke="#9c0a0a" stroke-width="1.8"/><circle cx="189.80" cy="183.80" r="1.35" fill="#a40c0c"/><circle cx="188.14" cy="190.00" r="1.35" fill="#a40c0c"/><circle cx="183.60" cy="194.54" r="1.35" fill="#a40c0c"/><circle cx="177.40" cy="196.20" r="1.35" fill="#a40c0c"/><circle cx="171.20" cy="194.54" r="1.35" fill="#a40c0c"/><circle cx="166.66" cy="190.00" r="1.35" fill="#a40c0c"/><circle cx="165.00" cy="183.80" r="1.35" fill="#a40c0c"/><circle cx="166.66" cy="177.60" r="1.35" fill="#a40c0c"/><circle cx="171.20" cy="173.06" r="1.35" fill="#a40c0c"/><circle cx="177.40" cy="171.40" r="1.35" fill="#a40c0c"/><circle cx="183.60" cy="173.06" r="1.35" fill="#a40c0c"/><circle cx="188.14" cy="177.60" r="1.35" fill="#a40c0c"/><rect x="215.40" y="174.40" width="36.80" height="19.00" fill="#b9bdbb" stroke="#1f1f1f" stroke-width="1.5"/><rect x="217.60" y="176.80" width="10.40" height="14.20" fill="#666" stroke="#9c0a0a" stroke-width="1.4"/><rect x="239.60" y="176.80" width="10.40" height="14.20" fill="#666" stroke="#9c0a0a" stroke-width="1.4"/><rect x="228.40" y="177.20" width="10.80" height="13.40" fill="#9a9a9a"/><path d="M217.6 176.8 H250 M217.6 191 H250" fill="none" stroke="#9c0a0a" stroke-width="1.1" stroke-dasharray="1.6 1.6"/><path d="M261.4 165.6 H269.8 V194.6 H290.4 V165.6 H298.6 V202.4 H261.4Z" fill="#8b8b8b" stroke="#1c1c1c" stroke-width="1.7"/><path d="M263.4 167.6 H267.8 V196.6 H292.4 V167.6 H296.6 V200.4 H263.4Z" fill="none" stroke="#7a2a2a" stroke-width="0.9" stroke-dasharray="1.2 1.2" opacity=".9"/><rect x="263.60" y="168.00" width="4.00" height="6.00" fill="#6a6a6a"/><rect x="292.40" y="168.00" width="4.00" height="6.00" fill="#6a6a6a"/><rect x="263.60" y="196.40" width="6.00" height="4.00" fill="#666"/><rect x="290.60" y="196.40" width="6.00" height="4.00" fill="#666"/><path d="M320.4 169.4 H353.6 V178.6 H344.6 V198.6 H329.4 V178.6 H320.4Z" fill="#a0a0a0" stroke="#1c1c1c" stroke-width="1.7" stroke-linejoin="round"/><path d="M323 171.6 H351 V176.4 H323Z" fill="none" stroke="#9c0a0a" stroke-width="1.0" stroke-dasharray="1.5 1.2"/><rect x="331.60" y="171.80" width="10.80" height="24.80" rx="2.4" fill="#8d8d8d" stroke="#9c0a0a" stroke-width="1.4"/><rect x="333.80" y="174.00" width="6.40" height="20.00" rx="2" fill="#8a8a8a"/><circle cx="333.00" cy="173.40" r="1.00" fill="#a40c0c"/><circle cx="341.00" cy="173.40" r="1.00" fill="#a40c0c"/><circle cx="333.00" cy="195.00" r="1.00" fill="#a40c0c"/><circle cx="337.00" cy="195.40" r="1.00" fill="#a40c0c"/><circle cx="341.00" cy="195.00" r="1.00" fill="#a40c0c"/><circle cx="332.60" cy="184.40" r="1.00" fill="#a40c0c"/><circle cx="341.40" cy="184.40" r="1.00" fill="#a40c0c"/><defs><linearGradient id="lg52" x1="0" y1="0" x2="0" y2="1"><stop offset="0" stop-color="#c4c4c4"/><stop offset="1" stop-color="#a6a6a6"/></linearGradient></defs><path d="M375.2 181.6 L393 193.0 L410.8 183.2 V185.0 L393 195.0 L375.2 183.6Z" fill="#6c6c6c"/><path d="M375.2 181.6 L392.6 174.0 L410.8 183.2 L393 193.0Z" fill="url(#lg52)" stroke="#8f8f8f" stroke-width="0.6" stroke-linejoin="round"/><ellipse cx="393" cy="181.79999999999998" rx="4.7" ry="2.7" fill="#c2506a"/><defs><linearGradient id="lg53" x1="0" y1="0" x2="0" y2="1"><stop offset="0" stop-color="#c4c4c4"/><stop offset="1" stop-color="#a6a6a6"/></linearGradient></defs><path d="M421.4 181.6 L439.2 193.0 L457.0 183.2 V185.0 L439.2 195.0 L421.4 183.6Z" fill="#6c6c6c"/><path d="M421.4 181.6 L438.8 174.0 L457.0 183.2 L439.2 193.0Z" fill="url(#lg53)" stroke="#8f8f8f" stroke-width="0.6" stroke-linejoin="round"/><path d="M424.59999999999997 181.79999999999998 L439.0 175.6 L453.59999999999997 183.2 L439.2 191.0Z" fill="none" stroke="#2345e6" stroke-width="2.2" stroke-linejoin="round"/><ellipse cx="439.2" cy="181.79999999999998" rx="4.7" ry="2.7" fill="#c2506a"/><defs><linearGradient id="lg54" x1="0" y1="0" x2="0" y2="1"><stop offset="0" stop-color="#c2c2c2"/><stop offset="1" stop-color="#9c9c9c"/></linearGradient></defs><path d="M467.4 181.4 L480.4 189.6 L503 177.6 V181 L481 192.8 L467.4 184.6Z" fill="#4a4a4a"/><path d="M467.4 180.4 L489 171.6 L503 176.4 L480.4 188.4Z" fill="url(#lg54)"/><ellipse cx="482.8" cy="178.6" rx="4.5" ry="2.6" fill="#c2506a"/><path d="M488.8 169.6 L501.4 175.6 L480.6 187.2 L468.4 179.6" fill="none" stroke="#3558f2" stroke-width="3.2" stroke-linejoin="round" stroke-linecap="round"/><defs><linearGradient id="lg55" x1="0" y1="0" x2="1" y2="0"><stop offset="0" stop-color="#5a5a5a"/><stop offset="1" stop-color="#3c3c3c"/></linearGradient></defs><path d="M530 189.4 L550.4 190.2 L549.6 193 L528 196.6Z" fill="#c9c9c9" opacity=".75"/><path d="M526.4 173.4 L542.4 173 V189.6 L523.8 196.8 L513 193.8Z" fill="url(#lg55)"/><path d="M526.4 175.0 L537.2 176.3 M524.2 178.4 L534.8 179.7 M521.9 181.8 L532.4 183.1 M519.7 185.2 L530.0 186.5 M517.5 188.6 L527.5 189.9 M515.2 192.0 L525.1 193.3 " fill="none" stroke="#8f8f8f" stroke-width="1.4" opacity=".85"/><path d="M570 169 L606 166.6 L603.6 191 L600.4 190 L602.4 170.2 L574.6 172.4 L577.6 199.6 L573.4 202Z" fill="#9a9a9a" stroke="#7c7c7c" stroke-width="0.6" stroke-linejoin="round"/><path d="M578 175 L601.6 190 M603 171.6 L578.8 199.6" fill="none" stroke="#a02a12" stroke-width="4.2" stroke-linecap="butt"/><path d="M626.2 170.4 L661 171.2 V194.8 L626.2 197.4Z" fill="#b85a2c"/><path d="M626.2 176 L661 176.4 M626.2 182.6 L661 182.6 M626.2 189.6 L661 189.2 M634 170.6 V176 M651 171 V176.4 M643 176.2 V182.6 M633.6 182.6 V189.6 M651.6 182.6 V189.4 M644 189.6 V196" fill="none" stroke="#e2b48f" stroke-width="1.0" opacity=".9"/><path d="M686.8000000000001 166 V202 M713.2 166 V202 M682.2 170.8 H717.8000000000001 M682.2 197.2 H717.8000000000001" fill="none" stroke="#23409c" stroke-width="2.5"/><defs><linearGradient id="lg56" x1="0" y1="0" x2="0" y2="1"><stop offset="0" stop-color="#ffe36a"/><stop offset="1" stop-color="#e0a800"/></linearGradient></defs><path d="M700.0 169.2 L706.2 176.2 H693.8000000000001Z" fill="url(#lg56)" stroke="#c89a10" stroke-width="0.6" stroke-linejoin="round"/><path d="M685.4000000000001 183.8 L692.8000000000001 177.6 V190Z" fill="url(#lg56)" stroke="#c89a10" stroke-width="0.6" stroke-linejoin="round"/><rect x="693.70" y="177.50" width="17.00" height="17.00" fill="#f4f4f4" opacity=".8"/><defs><radialGradient id="rg57" cx="0.4" cy="0.35" r="0.7"><stop offset="0" stop-color="#ffffff"/><stop offset="0.6" stop-color="#bfe2f8"/><stop offset="1" stop-color="#9cc8ea"/></radialGradient></defs><path d="M707.99 191.79 L715.41 199.21" fill="none" stroke="#5a3a10" stroke-width="4.2" stroke-linecap="round"/><path d="M707.99 191.79 L715.41 199.21" fill="none" stroke="#f08628" stroke-width="2.6" stroke-linecap="round"/><circle cx="702.40" cy="186.20" r="7.40" fill="url(#rg57)" stroke="#aebfcc" stroke-width="1.6"/></svg>
<!-- p63_side -->
<svg style="left:0px;top:214px;" width="82" height="530" viewBox="0 214 82 530"><defs><linearGradient id="lg58" x1="0" y1="0" x2="0" y2="1"><stop offset="0" stop-color="#fafafa"/><stop offset="0.7" stop-color="#e6e6e6"/><stop offset="1" stop-color="#bdbdbd"/></linearGradient></defs><path d="M37.7 226.4 H54.099999999999994 Q55.599999999999994 226.4 55.599999999999994 227.9 V254.5 Q55.599999999999994 256.0 54.099999999999994 256.0 H31.7 Q30.2 256.0 30.2 254.5 V233.9Z" fill="url(#lg58)" stroke="#6e6e6e" stroke-width="1.3" stroke-linejoin="round"/><path d="M30.2 233.9 L37.7 226.4 V233.9Z" fill="#5c5c5c" stroke="#4a4a4a" stroke-width="0.8" stroke-linejoin="round"/><rect x="31.00" y="252.40" width="23.80" height="3.00" rx="1" fill="#9a9a9a"/><text x="42.90" y="249.70" font-size="11.8" font-weight="bold" fill="#d9d9d9" stroke="#5c5c5c" stroke-width="1" text-anchor="middle" textLength="21.2" lengthAdjust="spacingAndGlyphs" opacity=".99">DWG</text><defs><linearGradient id="lg59" x1="0" y1="0" x2="0" y2="1"><stop offset="0" stop-color="#e8a0a0"/><stop offset="0.35" stop-color="#c64a4a"/><stop offset="1" stop-color="#8e1c1c"/></linearGradient></defs><path d="M42.6 243.5 V232.5 A8.5 8.5 0 0 1 59.6 232.5 V243.5 H53.8 V233.0 A2.7 2.7 0 0 0 48.4 233.0 V243.5Z" fill="url(#lg59)" stroke="#8a1a1a" stroke-width="1.1" stroke-linejoin="round"/><path d="M44.2 233.0 A6.9 6.9 0 0 1 58.0 233.0" fill="none" stroke="#f0c0c0" stroke-width="1.2" opacity=".7"/><rect x="43.50" y="236.00" width="4.00" height="5.20" fill="#9fd0e6" stroke="#6aa0bd" stroke-width="0.6"/><rect x="54.70" y="236.00" width="4.00" height="5.20" fill="#9fd0e6" stroke="#6aa0bd" stroke-width="0.6"/><rect x="33.00" y="273.00" width="22.60" height="30.60" fill="#fff" stroke="#5a5a5a" stroke-width="1.2"/><path d="M37.52 273 V303.6 M42.04 273 V303.6 M46.56 273 V303.6 M51.08 273 V303.6 M33 277.37 H55.6 M33 281.74 H55.6 M33 286.11 H55.6 M33 290.49 H55.6 M33 294.86 H55.6 M33 299.23 H55.6 " fill="none" stroke="#8d8d8d" stroke-width="1.1"/><rect x="33.00" y="299.40" width="22.60" height="4.20" fill="#8b8b8b"/><rect x="36.40" y="277.00" width="3.40" height="20.00" fill="#0a8a0a"/><rect x="36.40" y="294.80" width="16.60" height="3.20" fill="#0a8a0a"/><rect x="40.00" y="277.00" width="3.60" height="3.40" fill="#0a8a0a"/><rect x="36.20" y="276.80" width="3.80" height="3.60" fill="#1f8cff"/><rect x="36.20" y="294.60" width="3.80" height="3.60" fill="#1f8cff"/><rect x="51.40" y="294.60" width="3.80" height="3.60" fill="#1f8cff"/><rect x="50.40" y="272.60" width="3.40" height="2.40" fill="#b0184a"/><defs><linearGradient id="lg60" x1="0" y1="0" x2="0" y2="1"><stop offset="0" stop-color="#e8a0a0"/><stop offset="0.35" stop-color="#c64a4a"/><stop offset="1" stop-color="#8e1c1c"/></linearGradient></defs><path d="M43.6 292.34 V282.21999999999997 A7.82 7.82 0 0 1 59.24 282.21999999999997 V292.34 H53.904 V282.67999999999995 A2.4840000000000004 2.4840000000000004 0 0 0 48.936 282.67999999999995 V292.34Z" fill="url(#lg60)" stroke="#8a1a1a" stroke-width="1.1" stroke-linejoin="round"/><path d="M45.072 282.67999999999995 A6.348000000000001 6.348000000000001 0 0 1 57.768 282.67999999999995" fill="none" stroke="#f0c0c0" stroke-width="1.2" opacity=".7"/><rect x="44.43" y="285.44" width="3.68" height="4.78" fill="#9fd0e6" stroke="#6aa0bd" stroke-width="0.6"/><rect x="54.73" y="285.44" width="3.68" height="4.78" fill="#9fd0e6" stroke="#6aa0bd" stroke-width="0.6"/><rect x="30.40" y="319.20" width="25.40" height="29.40" fill="#fafafa" stroke="#5a5a5a" stroke-width="1.2"/><path d="M35.48 319.2 V348.59999999999997 M40.56 319.2 V348.59999999999997 M45.64 319.2 V348.59999999999997 M50.72 319.2 V348.59999999999997 M30.4 324.10 H55.8 M30.4 329.00 H55.8 M30.4 333.90 H55.8 M30.4 338.80 H55.8 M30.4 343.70 H55.8 " fill="none" stroke="#8d8d8d" stroke-width="1.1"/><rect x="30.40" y="344.20" width="25.40" height="4.40" fill="#8b8b8b"/><defs><linearGradient id="lg61" x1="0" y1="0" x2="0" y2="1"><stop offset="0" stop-color="#e8a0a0"/><stop offset="0.35" stop-color="#c64a4a"/><stop offset="1" stop-color="#8e1c1c"/></linearGradient></defs><path d="M43.0 335.9 V324.9 A8.5 8.5 0 0 1 60.0 324.9 V335.9 H54.2 V325.4 A2.7 2.7 0 0 0 48.8 325.4 V335.9Z" fill="url(#lg61)" stroke="#8a1a1a" stroke-width="1.1" stroke-linejoin="round"/><path d="M44.6 325.4 A6.9 6.9 0 0 1 58.4 325.4" fill="none" stroke="#f0c0c0" stroke-width="1.2" opacity=".7"/><rect x="43.90" y="328.40" width="4.00" height="5.20" fill="#9fd0e6" stroke="#6aa0bd" stroke-width="0.6"/><rect x="55.10" y="328.40" width="4.00" height="5.20" fill="#9fd0e6" stroke="#6aa0bd" stroke-width="0.6"/><rect x="29.40" y="365.20" width="25.40" height="29.20" fill="#fafafa" stroke="#5a5a5a" stroke-width="1.2"/><path d="M34.48 365.2 V394.4 M39.56 365.2 V394.4 M44.64 365.2 V394.4 M49.72 365.2 V394.4 M29.4 370.07 H54.8 M29.4 374.93 H54.8 M29.4 379.80 H54.8 M29.4 384.67 H54.8 M29.4 389.53 H54.8 " fill="none" stroke="#8d8d8d" stroke-width="1.1"/><rect x="29.40" y="390.00" width="25.40" height="4.40" fill="#8b8b8b"/><rect x="30.20" y="366.00" width="3.90" height="3.80" fill="#f40000"/><rect x="30.20" y="385.60" width="3.90" height="3.80" fill="#f40000"/><rect x="30.20" y="370.90" width="3.90" height="3.80" fill="#f40000"/><rect x="35.25" y="385.60" width="3.90" height="3.80" fill="#f40000"/><rect x="30.20" y="375.80" width="3.90" height="3.80" fill="#f40000"/><rect x="40.30" y="385.60" width="3.90" height="3.80" fill="#f40000"/><rect x="30.20" y="380.70" width="3.90" height="3.80" fill="#f40000"/><rect x="45.35" y="385.60" width="3.90" height="3.80" fill="#f40000"/><rect x="30.20" y="385.60" width="3.90" height="3.80" fill="#f40000"/><rect x="50.40" y="385.60" width="3.90" height="3.80" fill="#f40000"/><defs><linearGradient id="lg62" x1="0" y1="0" x2="0" y2="1"><stop offset="0" stop-color="#e8a0a0"/><stop offset="0.35" stop-color="#c64a4a"/><stop offset="1" stop-color="#8e1c1c"/></linearGradient></defs><path d="M41.4 382.1 V371.1 A8.5 8.5 0 0 1 58.4 371.1 V382.1 H52.599999999999994 V371.6 A2.7 2.7 0 0 0 47.199999999999996 371.6 V382.1Z" fill="url(#lg62)" stroke="#8a1a1a" stroke-width="1.1" stroke-linejoin="round"/><path d="M43.0 371.6 A6.9 6.9 0 0 1 56.8 371.6" fill="none" stroke="#f0c0c0" stroke-width="1.2" opacity=".7"/><rect x="42.30" y="374.60" width="4.00" height="5.20" fill="#9fd0e6" stroke="#6aa0bd" stroke-width="0.6"/><rect x="53.50" y="374.60" width="4.00" height="5.20" fill="#9fd0e6" stroke="#6aa0bd" stroke-width="0.6"/><path d="M56.04 453.10 L60.35 459.48" fill="none" stroke="#262626" stroke-width="6.2" stroke-linecap="round"/><path d="M56.04 453.10 L60.35 459.48" fill="none" stroke="#4c4c4c" stroke-width="3.0" stroke-linecap="round"/><circle cx="49.50" cy="443.40" r="11.20" fill="#b9b9b9" stroke="#2b2b2b" stroke-width="3.6"/><circle cx="49.50" cy="443.40" r="9.00" fill="none" stroke="#6e6e6e" stroke-width="1.0"/><defs><radialGradient id="rg63" cx="0.5" cy="0.4" r="0.7"><stop offset="0" stop-color="#c8eeff"/><stop offset="1" stop-color="#63c2f2"/></radialGradient></defs><circle cx="49.50" cy="443.40" r="6.80" fill="url(#rg63)"/><path d="M44.5 443.4 H54.5 M49.5 438.4 V448.4" fill="none" stroke="#0a78cc" stroke-width="2.8"/><path d="M56.04 499.30 L60.35 505.68" fill="none" stroke="#262626" stroke-width="6.2" stroke-linecap="round"/><path d="M56.04 499.30 L60.35 505.68" fill="none" stroke="#4c4c4c" stroke-width="3.0" stroke-linecap="round"/><circle cx="49.50" cy="489.60" r="11.20" fill="#b9b9b9" stroke="#2b2b2b" stroke-width="3.6"/><circle cx="49.50" cy="489.60" r="9.00" fill="none" stroke="#6e6e6e" stroke-width="1.0"/><defs><radialGradient id="rg64" cx="0.5" cy="0.4" r="0.7"><stop offset="0" stop-color="#c8eeff"/><stop offset="1" stop-color="#63c2f2"/></radialGradient></defs><circle cx="49.50" cy="489.60" r="6.80" fill="url(#rg64)"/><path d="M44.5 489.6 H54.5" fill="none" stroke="#0a78cc" stroke-width="2.8"/><path d="M56.04 545.50 L60.35 551.88" fill="none" stroke="#262626" stroke-width="6.2" stroke-linecap="round"/><path d="M56.04 545.50 L60.35 551.88" fill="none" stroke="#4c4c4c" stroke-width="3.0" stroke-linecap="round"/><circle cx="49.50" cy="535.80" r="11.20" fill="#b9b9b9" stroke="#2b2b2b" stroke-width="3.6"/><circle cx="49.50" cy="535.80" r="9.00" fill="none" stroke="#6e6e6e" stroke-width="1.0"/><defs><radialGradient id="rg65" cx="0.5" cy="0.4" r="0.7"><stop offset="0" stop-color="#c8eeff"/><stop offset="1" stop-color="#63c2f2"/></radialGradient></defs><circle cx="49.50" cy="535.80" r="6.80" fill="url(#rg65)"/><path d="M44.9 534.5999999999999 L49.5 530.0 L54.1 534.5999999999999Z M44.9 537.0 L49.5 541.5999999999999 L54.1 537.0Z" fill="#0a78cc"/><rect x="30.80" y="581.80" width="21.00" height="17.60" rx="1.5" fill="#bfe4fb" stroke="#1f8fe0" stroke-width="1.6"/><path d="M36 582 V599 M41.2 582 V599 M46.4 582 V599 M31 586.4 H51.6 M31 590.8 H51.6 M31 595.2 H51.6" fill="none" stroke="#4aa8ee" stroke-width="0.8"/><path d="M55.94 592.10 L60.25 598.48" fill="none" stroke="#262626" stroke-width="6.2" stroke-linecap="round"/><path d="M55.94 592.10 L60.25 598.48" fill="none" stroke="#4c4c4c" stroke-width="3.0" stroke-linecap="round"/><circle cx="49.40" cy="582.40" r="11.20" fill="#b9b9b9" stroke="#2b2b2b" stroke-width="3.6"/><circle cx="49.40" cy="582.40" r="9.00" fill="none" stroke="#6e6e6e" stroke-width="1.0"/><circle cx="49.40" cy="582.40" r="8.60" fill="#e8f0f4" opacity=".55"/><path d="M33.2 623 V648.6 M29.8 626.6 L33.2 622.8 L36.6 626.6 M29.8 645 L33.2 648.8 L36.6 645" fill="none" stroke="#1480d6" stroke-width="2.0" stroke-linejoin="round"/><path d="M30 634 L47 626.6 L64.6 633 V636 L47.6 645.4 L30 637Z" fill="#2a8fc8"/><path d="M30 634 L47 626.6 L64.6 633 L47.6 642.4Z" fill="#6cc4f4" stroke="#2f98d6" stroke-width="0.7"/><path d="M55.94 638.50 L60.25 644.88" fill="none" stroke="#262626" stroke-width="6.2" stroke-linecap="round"/><path d="M55.94 638.50 L60.25 644.88" fill="none" stroke="#4c4c4c" stroke-width="3.0" stroke-linecap="round"/><circle cx="49.40" cy="628.80" r="11.20" fill="#b9b9b9" stroke="#2b2b2b" stroke-width="3.6"/><circle cx="49.40" cy="628.80" r="9.00" fill="none" stroke="#6e6e6e" stroke-width="1.0"/><circle cx="49.40" cy="628.80" r="8.60" fill="#e8f0f4" opacity=".55"/><path d="M34.6 661.4 V697.4 M61 661.4 V697.4 M30 666.1999999999999 H65.6 M30 692.6 H65.6" fill="none" stroke="#23409c" stroke-width="2.5"/><defs><linearGradient id="lg66" x1="0" y1="0" x2="0" y2="1"><stop offset="0" stop-color="#ffe36a"/><stop offset="1" stop-color="#e0a800"/></linearGradient></defs><path d="M47.8 664.6 L54 671.6 H41.6Z" fill="url(#lg66)" stroke="#c89a10" stroke-width="0.6" stroke-linejoin="round"/><path d="M33.2 679.1999999999999 L40.6 673.0 V685.4Z" fill="url(#lg66)" stroke="#c89a10" stroke-width="0.6" stroke-linejoin="round"/><rect x="41.50" y="672.90" width="17.00" height="17.00" fill="#f4f4f4" opacity=".8"/><defs><radialGradient id="rg67" cx="0.4" cy="0.35" r="0.7"><stop offset="0" stop-color="#ffffff"/><stop offset="0.6" stop-color="#bfe2f8"/><stop offset="1" stop-color="#9cc8ea"/></radialGradient></defs><path d="M55.79 687.19 L63.21 694.61" fill="none" stroke="#5a3a10" stroke-width="4.2" stroke-linecap="round"/><path d="M55.79 687.19 L63.21 694.61" fill="none" stroke="#f08628" stroke-width="2.6" stroke-linecap="round"/><circle cx="50.20" cy="681.60" r="7.40" fill="url(#rg67)" stroke="#aebfcc" stroke-width="1.6"/></svg>
</body></html>
